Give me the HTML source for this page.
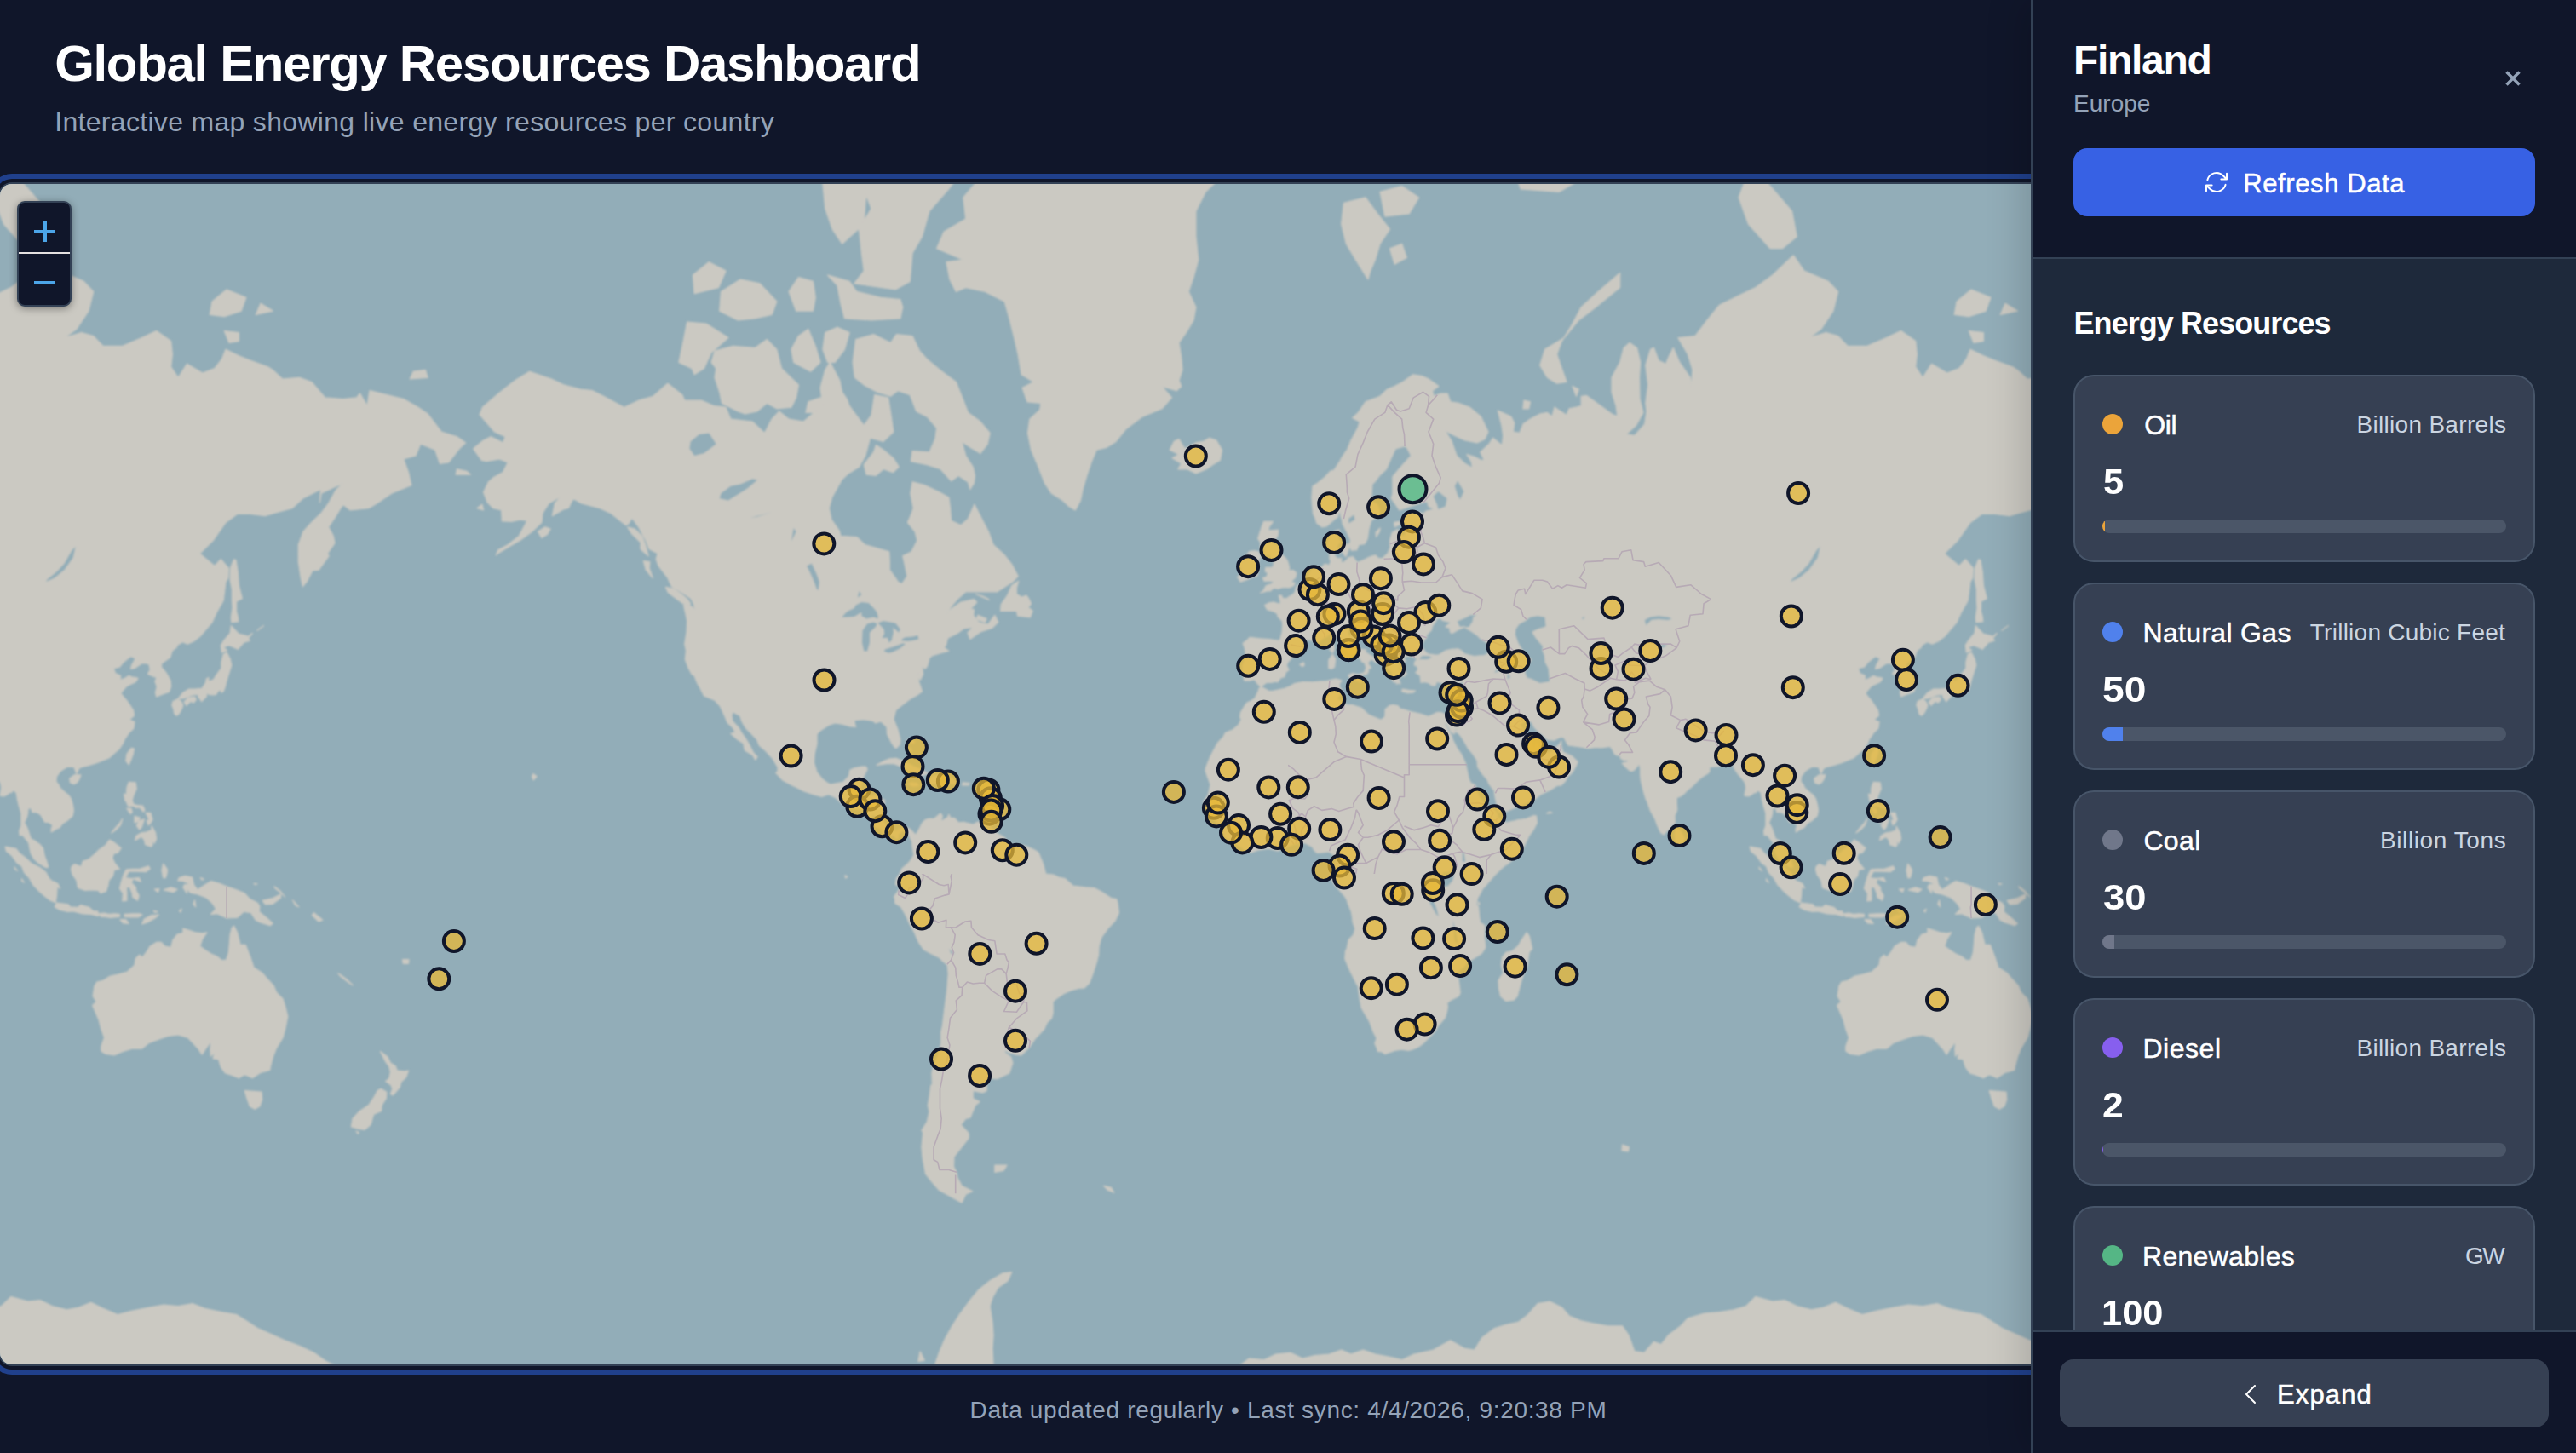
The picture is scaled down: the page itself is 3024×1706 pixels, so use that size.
<!DOCTYPE html>
<html lang="en"><head><meta charset="utf-8"><title>Global Energy Resources Dashboard</title>
<style>
*{box-sizing:border-box;margin:0;padding:0}
html,body{width:3024px;height:1706px;overflow:hidden;background:#10162a;font-family:"Liberation Sans",sans-serif;color:#fff}
.abs{position:absolute;white-space:nowrap;line-height:1}
#title{font-weight:700;color:#fff}
#sub{color:#94a3b8}
#mapwrap{position:absolute;left:-2px;top:214px;width:3030px;height:1390px;border:2px solid #334155;border-radius:16px;overflow:hidden;background:#92adb8;box-shadow:0 0 0 4px #10162a,0 0 0 10px #20408c}
#mapwrap svg{position:absolute;left:0;top:0}
#zoom{position:absolute;left:20px;top:236px;width:64px;height:124px;background:#10162a;border:2px solid #334155;border-radius:9px;box-shadow:0 2px 10px rgba(0,0,0,.4)}
#zoom i{position:absolute;background:#4ca5e8}
#zoom .sep{position:absolute;left:0;top:58px;width:60px;height:2px;background:#e5e1e1}
#foot{width:3024px;text-align:center;color:#94a3b8}
#panel{position:absolute;left:2384px;top:0;width:640px;height:1706px;background:#1e293b;border-left:2px solid #334155;box-shadow:-6px 0 44px rgba(0,0,0,.18);overflow:hidden}
#phead{position:absolute;left:0;top:0;width:638px;height:304px;background:#10162a;border-bottom:2px solid #334155}
#pfoot{position:absolute;left:0;top:1562px;width:638px;height:144px;background:#10162a;border-top:2px solid #334155}
.btn{position:absolute;border-radius:16px}
.card{position:absolute;left:48px;width:542px;height:220px;background:#364053;border:2px solid #475569;border-radius:24px}
.card .dot{position:absolute;left:32px;top:44px;width:24px;height:24px;border-radius:50%}
.card .nm{color:#fff;-webkit-text-stroke:.5px #fff}
.card .un{color:#cbd5e1}
.card .val{font-weight:700;color:#fff}
.card .bar{position:absolute;left:32px;top:168px;width:474px;height:16px;border-radius:8px;background:#4b5668;overflow:hidden}
.card .bar b{position:absolute;left:0;top:0;height:16px;display:block}
</style></head><body>
<div id="title" class="abs" style="left:64.20px;top:45.22px;font-size:60.00px;letter-spacing:-1.339px;">Global Energy Resources Dashboard</div>
<div id="sub" class="abs" style="left:64.20px;top:127.02px;font-size:32.00px;letter-spacing:0.314px;">Interactive map showing live energy resources per country</div>

<div id="mapwrap">
<svg width="3026" height="1386" viewBox="0 216 3026 1386">
<rect x="0" y="200" width="3030" height="1420" fill="#92adb8"/>
<defs><filter id="soft" x="-10" y="190" width="3100" height="1450" filterUnits="userSpaceOnUse"><feGaussianBlur stdDeviation="0.9"/></filter></defs>
<g filter="url(#soft)"><path d="M555.7,526.8 567.6,517.0 576.2,512.8 590.4,519.9 593.2,512.8 580.7,507.0 563.1,486.8 566.5,478.2 585.3,462.0 604.6,446.8 621.7,436.2 647.3,445.0 661.5,451.9 681.4,457.0 695.6,458.7 709.9,466.1 732.6,478.2 749.7,470.2 766.8,465.3 783.8,450.2 800.9,463.7 803.7,470.2 823.6,470.2 837.9,476.6 852.1,478.2 857.8,492.1 883.4,495.1 897.6,508.4 906.1,492.1 914.7,482.9 926.0,492.1 943.1,495.1 957.3,482.9 965.9,476.6 963.0,455.3 968.7,434.4 974.4,425.4 985.8,446.8 988.6,460.3 994.3,468.6 997.2,476.6 1002.8,484.4 1014.2,499.6 1022.8,487.5 1026.7,463.7 1042.7,466.9 1045.5,484.4 1048.9,507.0 1037.0,518.4 1021.6,514.2 1015.9,535.0 1008.5,548.2 996.0,555.9 988.1,563.4 976.7,584.0 973.3,596.7 976.1,610.2 985.2,623.1 986.9,629.4 1005.7,630.5 1015.4,639.7 1043.8,647.8 1044.4,659.6 1044.4,669.1 1051.2,678.5 1054.0,683.1 1058.6,685.8 1064.9,676.6 1061.4,659.6 1059.7,652.7 1070.0,647.8 1076.8,634.6 1074.0,624.2 1065.4,613.4 1069.4,604.6 1072.2,596.7 1068.8,579.3 1071.1,565.9 1085.3,569.6 1103.0,578.1 1113.8,584.0 1115.5,596.7 1116.6,611.2 1128.0,616.7 1136.5,609.1 1143.9,592.2 1151.9,607.9 1160.4,624.2 1166.1,639.7 1179.2,651.8 1187.7,662.5 1195.1,676.6 1188.9,683.1 1170.7,694.8 1150.8,694.8 1133.7,694.8 1124.0,703.6 1117.8,710.5 1109.8,722.3 1116.1,715.6 1128.0,707.1 1143.4,703.6 1146.8,707.1 1140.5,713.9 1136.5,714.8 1143.4,715.6 1142.8,722.3 1146.8,729.0 1150.8,731.4 1159.9,733.1 1167.8,722.3 1171.8,730.6 1165.0,737.1 1150.8,741.9 1138.8,750.6 1136.0,742.7 1142.8,736.3 1131.4,737.9 1124.0,743.5 1112.6,749.1 1110.4,757.6 1108.1,760.0 1113.8,764.5 1106.4,766.1 1093.9,769.8 1091.0,772.9 1088.7,781.8 1085.9,785.4 1082.5,781.8 1083.6,792.0 1080.2,798.4 1077.4,788.4 1078.5,799.9 1082.5,811.8 1076.8,816.0 1068.3,820.8 1057.5,829.0 1051.8,833.7 1048.9,844.3 1054.0,856.7 1056.9,868.3 1056.3,874.0 1052.3,878.4 1050.6,877.8 1046.6,872.1 1041.5,861.9 1041.0,853.5 1034.1,847.0 1027.9,848.9 1024.5,846.3 1015.4,845.0 1010.8,845.0 1002.8,845.6 1004.0,852.2 1004.8,853.5 997.2,852.8 988.6,850.2 980.1,848.9 972.7,851.5 963.6,857.4 959.0,861.9 959.0,873.4 956.2,885.3 955.6,895.8 959.0,906.8 965.3,914.7 971.6,919.5 975.0,921.0 982.9,919.5 989.8,918.3 996.6,911.0 997.7,904.4 1002.8,901.9 1011.4,900.1 1016.5,900.1 1018.2,903.2 1014.2,911.0 1011.4,918.9 1010.2,924.9 1006.8,933.8 1008.5,935.0 1014.2,934.4 1022.8,935.0 1028.4,933.8 1038.7,939.7 1037.0,951.4 1035.8,960.1 1036.4,963.6 1039.8,968.8 1043.8,971.7 1048.4,974.6 1052.3,975.7 1058.0,972.3 1062.6,971.1 1068.3,973.4 1071.7,976.9 1075.1,980.3 1079.6,972.3 1082.5,966.5 1086.5,962.5 1089.9,961.3 1096.7,961.3 1104.1,954.9 1106.4,958.4 1104.7,963.0 1106.4,963.6 1112.6,959.6 1113.8,956.1 1115.5,960.1 1120.6,960.7 1125.2,965.9 1131.4,965.4 1142.2,968.2 1146.8,965.4 1159.3,964.8 1156.4,968.8 1161.6,969.4 1167.8,976.9 1179.2,983.2 1181.5,987.2 1187.2,991.8 1198.0,992.4 1204.8,993.5 1214.5,998.1 1219.0,1000.9 1224.7,1014.6 1227.6,1026.0 1236.7,1027.1 1242.9,1030.0 1250.3,1031.7 1260.0,1040.2 1274.2,1041.9 1284.4,1042.5 1293.0,1047.1 1304.4,1054.5 1310.6,1055.6 1311.8,1059.1 1313.5,1071.7 1308.9,1081.4 1301.5,1089.0 1293.0,1100.6 1290.1,1111.1 1289.6,1121.2 1287.3,1130.1 1282.7,1144.0 1278.8,1154.3 1273.1,1159.9 1266.2,1160.5 1257.1,1163.0 1248.6,1166.7 1239.5,1173.0 1236.1,1176.1 1236.1,1189.5 1234.4,1195.9 1229.3,1200.5 1225.8,1208.3 1215.6,1219.0 1208.2,1229.8 1199.1,1238.8 1192.3,1238.1 1183.2,1235.3 1179.8,1231.9 1179.8,1236.0 1186.6,1240.9 1188.9,1247.9 1184.9,1260.0 1170.7,1266.6 1158.2,1265.8 1158.2,1280.6 1153.6,1282.9 1142.2,1280.6 1142.2,1289.7 1150.2,1293.6 1145.1,1297.5 1138.8,1312.5 1133.7,1313.3 1128.0,1320.6 1137.1,1330.5 1137.1,1336.4 1126.9,1349.3 1120.0,1358.1 1119.5,1369.8 1122.9,1376.3 1124.0,1382.9 1129.1,1392.4 1141.7,1398.8 1133.7,1402.2 1129.1,1412.1 1116.6,1405.2 1102.4,1397.3 1093.9,1387.6 1086.5,1378.2 1083.1,1359.9 1081.9,1346.7 1083.6,1329.7 1081.9,1327.2 1088.2,1317.3 1091.0,1305.3 1089.3,1297.5 1091.0,1288.2 1092.7,1274.7 1094.4,1273.2 1093.9,1260.0 1096.1,1251.4 1101.3,1238.8 1104.7,1225.1 1104.7,1211.6 1106.4,1204.4 1108.7,1185.6 1111.5,1164.2 1113.2,1143.4 1112.1,1133.1 1105.8,1127.7 1102.4,1124.2 1092.7,1119.4 1084.2,1114.7 1077.9,1105.3 1073.4,1094.8 1067.1,1083.2 1064.9,1078.0 1062.0,1072.2 1057.5,1064.8 1050.6,1060.2 1050.6,1055.1 1049.5,1052.8 1054.6,1045.9 1057.5,1041.4 1051.2,1038.5 1052.3,1031.7 1056.3,1026.0 1058.6,1020.3 1063.7,1015.8 1068.3,1011.2 1072.8,1003.8 1071.1,994.7 1070.5,987.2 1068.8,984.9 1066.6,979.2 1059.7,975.2 1054.6,979.2 1054.6,984.4 1051.8,984.9 1050.1,981.5 1045.5,980.3 1040.4,979.2 1040.4,980.3 1035.8,978.0 1033.0,972.3 1027.9,971.1 1023.9,967.1 1024.5,963.0 1018.8,957.2 1014.2,951.4 1008.5,950.2 1000.0,948.5 992.6,946.1 987.5,942.6 981.2,936.7 972.7,932.6 964.7,935.5 954.5,932.6 943.7,929.0 934.6,924.3 930.6,922.5 918.6,915.9 910.7,907.4 913.0,905.6 913.0,900.7 906.7,890.3 898.7,881.5 891.3,875.3 888.5,868.3 881.1,860.6 875.4,854.8 871.4,848.3 868.6,840.4 860.1,835.7 858.9,840.4 860.1,847.0 866.9,854.1 870.3,860.0 874.8,866.4 878.8,872.7 884.5,884.0 889.1,888.4 886.8,892.1 883.4,886.5 874.3,880.9 872.6,872.7 865.7,868.3 857.8,861.3 862.9,860.0 860.6,854.8 853.8,848.3 852.1,843.7 848.1,835.0 845.3,829.0 839.0,822.2 826.5,817.0 822.5,809.0 818.5,802.0 815.1,793.4 812.3,792.0 808.3,784.7 804.3,774.4 805.4,763.8 803.7,756.1 806.0,741.9 806.6,729.0 804.3,718.1 802.6,710.5 812.3,712.2 815.7,717.3 814.5,709.6 811.1,702.7 802.0,696.6 788.4,688.5 783.8,678.5 773.0,664.4 770.2,656.7 771.9,649.8 762.2,644.8 758.2,634.6 749.7,618.8 747.4,615.6 741.7,607.9 738.3,614.5 734.9,616.7 716.7,602.4 704.2,596.7 682.6,591.0 672.9,585.2 667.2,596.7 661.5,597.9 648.4,605.7 651.3,591.0 658.7,582.8 644.4,591.0 637.0,602.4 635.9,613.4 624.5,624.2 610.3,634.6 596.1,642.8 584.7,649.8 582.4,651.8 584.7,645.8 596.1,639.7 609.2,629.4 616.0,616.7 618.8,611.2 610.3,610.2 600.6,612.3 589.3,611.8 588.7,599.0 579.0,596.7 572.2,589.8 567.6,578.1 573.3,565.9 579.0,560.9 590.4,554.6 596.1,543.0 586.4,539.0 571.1,541.6 565.4,540.3ZM1262.3,599.0 1254.9,594.5 1247.5,587.5 1234.4,579.3 1226.4,567.2 1217.9,545.6 1210.5,528.2 1206.5,508.4 1208.8,492.1 1220.7,481.3 1221.9,473.4 1205.9,471.8 1200.2,455.3 1213.3,448.5 1199.1,439.8 1195.1,416.0 1190.6,396.6 1184.9,373.8 1179.2,353.9 1156.4,342.4 1133.7,337.6 1122.3,342.4 1114.9,328.0 1110.9,307.7 1130.8,305.1 1099.6,291.7 1108.1,272.0 1133.7,257.1 1130.8,231.9 1147.9,211.6 1162.1,186.3 1187.7,158.9 1221.9,150.0 1261.7,150.0 1312.9,150.0 1341.3,150.0 1375.5,150.0 1386.8,150.6 1426.7,174.8 1443.7,197.4 1415.3,225.3 1403.9,247.9 1403.9,277.7 1406.8,305.1 1401.1,325.5 1395.4,342.4 1403.9,360.7 1401.1,375.9 1392.5,390.5 1384.0,402.5 1386.8,419.8 1388.0,434.4 1384.0,446.8 1386.8,453.6 1381.2,458.7 1364.1,453.6 1375.5,466.9 1364.1,479.8 1341.3,489.1 1321.4,504.1 1310.0,518.4 1298.7,525.4 1287.3,528.2 1281.6,541.6 1275.9,558.4 1271.4,573.3 1268.5,587.5ZM1138.8,574.5 1136.5,565.9 1125.2,558.4 1116.6,564.7 1104.1,550.8 1088.2,545.6 1069.4,541.6 1071.1,529.5 1091.0,530.9 1097.8,515.6 1099.6,502.6 1088.2,489.1 1075.7,482.9 1068.3,463.7 1054.0,458.7 1045.5,465.3 1029.6,460.3 1014.2,451.9 1003.4,443.3 1001.1,425.4 1004.6,398.6 1025.6,392.5 1045.5,402.5 1052.3,392.5 1071.1,394.6 1079.6,412.2 1088.2,421.7 1103.5,434.4 1122.3,448.5 1129.7,466.9 1136.5,484.4 1150.8,495.1 1162.1,508.4 1159.3,521.3 1150.8,532.3 1139.4,525.4 1129.1,518.4 1133.7,535.0 1142.2,548.2 1144.5,558.4 1143.4,567.2ZM866.3,482.9 847.5,473.4 844.7,460.3 839.0,443.3 840.7,432.6 835.0,425.4 839.0,412.2 860.6,406.4 886.2,408.4 900.4,398.6 911.8,410.3 917.5,432.6 937.4,451.9 934.6,466.9 928.9,478.2 911.8,479.8 900.4,473.4 889.1,482.9 874.8,486.0ZM812.3,432.6 796.9,425.4 802.6,398.6 806.6,378.0 829.3,380.2 854.9,396.6 835.0,414.1 826.5,432.6 815.1,439.8ZM1002.8,332.8 1051.2,340.0 1068.3,330.4 1071.1,297.1 1082.5,277.7 1091.0,247.9 1113.8,221.9 1145.1,178.7 1159.3,150.0 1119.5,150.0 1074.0,150.0 1039.8,150.0 1017.1,158.9 991.5,186.3 1011.4,215.1 1022.8,244.8 1008.5,269.1 1011.4,297.1 1014.2,318.0ZM988.6,286.2 1014.2,263.1 1017.1,221.9 982.9,186.3 965.9,215.1 968.7,244.8 977.2,269.1ZM1056.9,373.8 1022.8,375.9 991.5,373.8 986.9,356.2 982.9,335.2 971.6,323.0 997.2,330.4 1005.7,342.4 1034.1,349.4 1056.9,351.7 1059.7,360.7ZM971.6,425.4 965.9,410.3 968.7,390.5 982.9,384.3 997.2,390.5 991.5,410.3 980.1,425.4ZM951.6,436.2 931.7,425.4 928.9,410.3 937.4,394.6 948.8,386.4 957.3,406.4 963.0,425.4ZM866.3,375.9 844.7,365.1 846.4,342.4 869.2,328.0 891.9,332.8 911.8,353.9 906.1,369.5 886.2,373.8ZM954.5,365.1 934.6,365.1 926.0,342.4 937.4,325.5 954.5,330.4 957.3,349.4ZM815.1,344.7 813.4,323.0 832.2,307.7 852.1,318.0 843.6,337.6ZM946.0,484.4 948.8,471.8 963.0,466.9 968.7,476.6 960.2,484.4ZM1017.1,557.2 1014.2,545.6 1025.6,530.9 1028.4,522.6 1037.0,528.2 1048.4,537.7 1055.2,548.2 1048.4,554.6 1037.0,550.8 1028.4,558.4ZM1209.4,724.8 1194.6,723.2 1193.4,717.3 1174.6,717.3 1175.2,709.6 1182.6,699.2 1187.7,687.6 1195.7,682.2 1193.4,690.3 1193.4,697.5 1199.1,701.0 1204.8,699.2 1207.6,702.7 1210.5,708.8 1207.1,713.1 1212.2,717.3ZM1161.0,704.5 1145.6,697.5 1153.6,700.1 1159.3,702.7ZM1156.4,730.6 1146.2,727.3 1147.9,722.3 1158.2,726.5ZM809.4,711.4 802.0,708.8 792.4,701.8 784.4,695.7 781.5,689.4 790.6,691.2 799.8,697.5 807.1,703.6 810.6,708.8ZM766.2,678.5 758.2,669.1 755.4,658.6 762.8,659.6 762.2,667.2ZM635.9,631.5 631.4,624.2 639.9,618.8 646.2,621.0 642.7,627.3ZM761.1,652.7 752.0,644.8 752.0,636.7 741.2,626.3 736.6,618.8 745.1,621.0 753.7,629.4 757.7,639.7ZM552.3,557.2 535.2,557.2 536.4,550.8 547.7,553.3ZM567.6,599.0 560.2,596.7 565.9,592.2ZM1029.0,898.3 1038.1,893.3 1044.4,890.9 1051.8,890.3 1062.6,894.6 1072.8,900.1 1080.8,903.2 1089.9,908.0 1083.6,910.4 1070.5,910.4 1072.2,906.2 1067.1,905.6 1058.0,900.1 1050.1,897.0 1042.7,896.4 1034.1,897.7ZM1088.7,919.5 1094.4,911.7 1102.4,910.4 1110.9,911.0 1118.3,914.1 1122.9,918.3 1119.5,920.7 1110.9,919.5 1105.2,923.7 1099.6,920.7 1093.3,920.7ZM1066.6,920.7 1069.4,918.9 1076.2,919.5 1078.5,922.5 1072.2,923.1ZM1129.7,921.9 1130.3,918.9 1138.2,919.5 1137.1,921.9ZM1159.9,968.2 1161.6,964.2 1165.5,964.2 1165.0,968.2ZM1070.0,884.0 1067.1,878.4 1069.4,879.0ZM1064.3,869.6 1068.8,868.3 1074.0,870.8 1071.7,872.7ZM1167.8,1368.0 1182.0,1368.0 1178.1,1374.4 1167.8,1376.3ZM626.2,915.9 624.5,911.7 625.7,908.6 630.2,911.7ZM992.6,1031.1 992.0,1027.7 994.9,1029.4ZM-587.2,799.1 -589.5,786.9 -589.5,781.8 -585.5,769.1 -586.6,761.5 -588.9,755.3 -583.8,751.4 -580.9,748.3 -568.4,749.8 -557.6,750.6 -553.1,751.4 -546.8,752.2 -545.1,750.6 -542.8,741.9 -542.3,733.9 -542.8,729.0 -547.9,724.0 -548.5,720.7 -552.5,718.1 -560.5,715.6 -563.3,710.5 -558.2,707.9 -553.1,707.1 -547.4,708.8 -544.5,708.8 -546.8,699.2 -543.4,699.2 -542.3,702.7 -537.1,702.7 -535.4,701.0 -529.7,697.5 -527.5,694.8 -526.9,690.3 -525.2,687.6 -522.3,687.2 -519.5,685.8 -516.1,683.1 -512.7,678.5 -509.0,669.6 -505.3,667.2 -500.7,665.3 -496.2,666.3 -493.3,662.5 -490.5,662.5 -487.6,664.4 -486.5,660.5 -484.8,660.5 -487.1,656.7 -487.1,650.8 -488.8,644.8 -489.9,639.7 -487.1,628.4 -479.7,623.1 -475.7,622.0 -476.3,625.2 -477.4,632.5 -474.0,635.6 -477.4,639.7 -480.2,644.8 -480.8,649.8 -482.0,651.8 -478.0,655.7 -472.9,655.7 -474.0,659.6 -471.1,660.5 -467.2,657.6 -464.9,654.7 -459.8,653.7 -454.6,660.5 -447.3,657.6 -439.9,653.7 -433.6,651.8 -429.6,655.7 -425.1,655.7 -422.2,652.7 -418.8,649.8 -416.0,642.8 -416.5,634.6 -413.7,625.2 -407.4,621.5 -403.4,629.4 -398.9,629.4 -397.2,623.1 -396.6,614.5 -402.3,611.2 -402.3,607.9 -395.5,602.9 -389.2,601.3 -376.7,602.9 -373.9,600.1 -364.2,597.9 -371.0,594.5 -372.7,588.7 -381.3,591.0 -393.8,595.0 -405.2,599.0 -409.7,592.2 -414.8,585.2 -413.1,579.3 -413.1,559.7 -405.7,550.8 -401.2,545.6 -391.5,535.0 -396.6,525.4 -398.9,524.0 -409.7,526.8 -415.4,539.0 -420.5,550.8 -428.5,558.4 -434.2,565.9 -437.0,568.4 -437.6,576.9 -438.2,588.7 -431.3,592.2 -429.0,596.7 -428.5,604.6 -438.2,611.2 -441.0,621.0 -442.7,632.5 -446.1,638.7 -452.9,639.7 -455.2,645.8 -457.5,645.8 -461.5,646.3 -462.6,643.8 -463.8,639.7 -462.6,634.6 -463.2,632.5 -468.3,622.0 -471.7,615.6 -472.9,609.1 -474.0,606.8 -475.1,597.9 -478.0,607.9 -479.1,607.9 -485.4,613.4 -490.5,617.8 -496.2,618.8 -502.4,614.0 -504.1,607.9 -506.4,603.5 -507.6,592.2 -508.1,584.0 -507.0,570.8 -501.3,567.2 -496.7,563.4 -492.2,559.7 -486.5,553.3 -482.0,552.1 -475.1,541.6 -472.3,536.3 -466.6,528.2 -462.0,517.0 -454.1,502.6 -451.8,495.1 -460.3,490.6 -453.5,484.4 -445.0,471.8 -436.4,468.6 -427.9,465.3 -419.4,457.0 -410.8,453.6 -401.2,448.5 -389.2,439.8 -378.4,441.5 -371.0,445.0 -359.1,453.6 -366.5,458.7 -364.8,465.3 -356.8,462.0 -348.8,462.0 -345.4,471.8 -335.8,473.4 -322.7,478.2 -309.6,489.1 -301.0,507.0 -305.0,515.6 -314.1,519.9 -328.4,517.0 -340.9,511.3 -351.7,505.5 -344.3,517.0 -338.0,535.0 -328.4,544.3 -319.3,549.5 -321.0,541.6 -326.1,533.6 -317.0,536.3 -309.6,540.3 -305.6,540.3 -310.2,530.9 -299.9,521.3 -295.4,514.2 -286.8,521.3 -284.6,522.6 -283.4,511.3 -285.1,499.6 -289.7,482.1 -274.3,489.1 -270.3,496.6 -271.5,507.0 -264.1,508.4 -260.1,498.1 -251.6,492.1 -240.2,486.0 -231.6,484.4 -226.0,489.1 -223.1,478.2 -208.9,487.5 -206.0,479.8 -197.5,478.2 -191.8,476.6 -191.8,465.3 -185.6,464.5 -169.1,476.6 -156.0,486.0 -149.2,489.1 -150.9,476.6 -156.0,460.3 -156.0,443.3 -146.3,425.4 -141.8,408.4 -134.9,402.5 -126.4,408.4 -122.4,425.4 -123.6,443.3 -123.0,468.6 -119.0,484.4 -127.5,499.6 -138.9,509.9 -129.2,511.3 -117.3,498.1 -115.0,482.9 -116.2,473.4 -113.3,451.9 -116.2,429.0 -110.5,410.3 -106.5,408.4 -100.8,423.5 -92.3,427.2 -89.4,419.8 -83.7,408.4 -76.3,425.4 -63.8,443.3 -62.7,455.3 -61.0,434.4 -66.7,416.0 -78.0,396.6 -58.1,394.6 -43.9,375.9 -29.7,358.4 -6.9,347.0 13.0,337.6 32.9,323.0 57.4,299.8 69.9,318.0 98.3,330.4 109.7,342.4 104.0,365.1 89.8,386.4 75.6,396.6 95.5,390.5 109.7,394.6 121.1,406.4 143.8,406.4 166.6,396.6 183.6,388.5 200.7,400.6 202.4,416.0 200.7,430.8 209.2,443.3 219.5,427.2 237.7,438.0 251.9,432.6 260.4,421.7 265.0,410.3 280.4,417.9 294.6,423.5 314.5,430.8 320.2,434.4 331.6,445.0 351.5,443.3 365.7,448.5 381.6,466.9 402.7,468.6 418.6,466.9 422.6,462.0 431.1,476.6 432.8,465.3 434.0,458.7 453.9,463.7 473.8,468.6 490.8,478.2 502.2,486.0 518.2,507.0 536.4,512.8 546.6,519.9 539.2,526.8 526.7,543.0 516.4,544.3 510.8,528.2 493.7,521.3 488.0,535.0 473.8,539.0 479.5,554.6 482.9,569.6 459.6,579.3 442.5,591.0 432.8,596.7 411.2,599.0 402.7,592.2 393.0,607.9 385.6,618.8 391.3,629.4 393.0,637.7 384.5,649.8 386.2,652.7 374.2,669.1 366.8,670.1 360.0,683.1 355.4,688.5 353.2,678.5 350.3,659.6 350.3,639.7 356.0,624.2 365.7,613.4 377.1,602.4 385.6,591.0 394.1,575.7 402.7,567.2 377.1,579.3 375.4,589.8 376.5,574.5 355.4,585.2 342.9,596.7 321.9,602.4 311.1,605.7 293.4,603.5 278.6,603.5 265.0,613.4 250.2,634.6 234.8,649.8 237.7,652.7 251.9,664.4 259.3,656.7 268.4,667.2 267.8,678.5 265.0,683.1 263.3,696.6 262.2,705.3 254.8,718.1 249.1,730.6 242.2,738.7 235.4,746.7 227.4,753.0 220.1,756.1 214.4,753.8 208.1,757.6 207.5,760.0 202.4,763.8 199.6,772.1 192.2,777.3 189.9,778.8 189.3,783.2 195.0,789.8 200.1,799.1 200.7,806.2 198.4,812.5 190.5,815.3 183.6,818.0 182.5,813.2 184.2,806.2 181.9,799.9 184.2,795.6 178.0,793.4 173.4,791.2 176.2,786.9 175.1,780.3 171.1,778.8 166.6,778.8 158.0,784.7 153.5,785.4 154.6,781.0 159.2,772.9 153.5,770.6 144.4,778.1 140.4,783.2 133.6,784.7 135.3,790.5 141.5,793.4 141.0,798.4 146.7,796.3 151.2,793.4 154.6,794.9 159.2,795.6 162.0,796.3 159.2,800.6 148.9,805.5 143.3,811.8 142.1,814.6 149.5,823.5 156.3,833.7 156.9,835.7 157.5,840.4 151.8,845.0 158.0,847.6 156.9,855.4 151.8,860.0 146.1,868.3 144.4,872.7 141.0,877.8 139.8,879.7 135.9,882.8 128.5,889.6 121.1,892.7 113.7,895.8 109.7,897.0 101.2,899.5 95.5,900.7 92.6,902.5 89.8,908.6 88.1,903.8 86.9,900.7 80.1,900.1 78.4,900.7 71.6,905.0 66.5,911.7 65.9,917.7 69.3,921.9 70.4,924.9 76.7,930.8 80.1,933.2 83.5,937.9 85.8,946.7 86.4,952.0 85.2,957.8 79.0,963.6 73.3,967.1 69.9,971.7 65.9,973.4 60.2,976.9 60.2,972.9 61.9,968.8 58.5,966.5 56.8,965.4 52.8,965.4 50.0,960.7 48.2,957.2 44.3,954.3 40.3,953.4 38.0,953.7 36.3,948.5 32.9,949.6 32.7,954.3 31.8,958.4 28.6,965.9 32.3,972.9 34.0,978.0 36.3,984.9 40.3,986.7 43.7,989.5 46.0,990.7 50.5,995.8 52.2,1004.4 55.1,1012.3 56.8,1018.0 54.5,1018.6 51.7,1017.5 49.4,1015.8 45.4,1013.5 40.3,1008.9 36.3,1002.1 34.6,995.2 34.0,990.7 32.9,988.4 29.5,984.4 26.6,980.3 23.2,980.9 22.6,975.7 24.9,969.4 24.9,954.9 22.1,945.6 20.4,938.5 19.2,930.8 15.8,927.8 13.0,930.8 11.8,930.2 7.3,933.8 4.4,935.0 0.5,934.4 -0.1,933.8 1.6,924.9 0.5,918.9 -3.5,913.5 -7.5,909.2 -12.6,901.3 -13.8,895.8 -16.6,892.7 -20.0,894.6 -22.3,897.7 -26.8,898.9 -32.5,900.1 -38.2,900.1 -41.1,901.3 -41.1,905.6 -42.8,908.0 -47.9,911.0 -53.0,914.7 -62.1,923.7 -67.8,928.4 -71.2,932.0 -75.2,935.0 -79.8,936.7 -79.8,943.2 -79.2,950.8 -82.0,957.8 -81.7,964.2 -82.0,967.1 -86.6,970.0 -85.4,972.9 -88.3,973.4 -91.1,975.7 -94.8,979.9 -98.5,977.5 -102.5,969.0 -105.1,961.6 -110.5,952.0 -114.5,940.9 -116.2,937.3 -119.0,927.8 -121.8,916.2 -122.4,909.8 -122.4,903.2 -123.0,899.5 -123.6,895.8 -125.3,898.9 -129.2,903.8 -132.1,905.6 -135.5,904.4 -140.1,900.1 -143.8,896.1 -137.8,894.6 -136.1,892.1 -141.5,892.7 -145.7,890.3 -146.3,886.5 -149.2,887.2 -152.6,885.3 -155.0,880.3 -157.7,876.5 -168.5,877.8 -175.0,877.5 -181.6,878.4 -184.7,878.7 -191.3,877.2 -207.2,874.9 -212.3,865.7 -216.3,865.4 -223.7,869.2 -231.6,868.3 -236.8,863.2 -239.6,861.3 -247.0,854.1 -249.8,848.3 -253.8,846.3 -259.5,847.3 -264.6,851.2 -260.1,856.7 -253.5,866.4 -251.0,869.9 -249.8,874.0 -247.0,880.9 -244.7,871.8 -242.7,877.2 -243.6,881.5 -242.5,884.0 -237.3,884.7 -226.8,882.5 -221.4,877.5 -217.4,874.0 -215.1,870.2 -215.4,875.3 -213.2,883.1 -202.6,887.8 -195.8,894.6 -198.6,900.7 -202.1,906.8 -207.8,912.0 -210.0,916.5 -215.1,921.9 -220.3,922.5 -228.2,927.8 -233.9,930.2 -239.0,932.6 -245.9,937.9 -256.7,942.6 -262.9,945.6 -271.5,949.1 -280.0,952.6 -288.8,953.4 -290.0,949.6 -291.7,940.9 -293.1,935.0 -293.9,928.4 -299.9,920.7 -302.2,915.3 -308.4,908.0 -313.3,900.7 -314.1,892.7 -319.5,884.7 -324.4,879.0 -328.6,871.5 -332.9,864.5 -336.9,860.0 -339.2,860.0 -338.0,856.7 -336.9,850.2 -337.5,850.2 -339.7,856.7 -341.2,861.9 -344.9,858.7 -347.7,853.5 -350.8,847.3 -352.2,838.7 -343.7,839.4 -340.0,837.0 -338.3,833.0 -336.9,828.3 -335.8,824.9 -334.0,820.8 -332.3,817.0 -332.6,809.7 -331.5,806.2 -330.1,802.0 -331.2,799.9 -334.9,802.3 -339.2,800.6 -342.9,804.1 -349.1,805.9 -354.0,802.3 -361.4,800.2 -363.1,804.8 -367.3,804.8 -370.5,802.0 -375.3,800.6 -380.1,801.3 -380.1,799.1 -381.0,793.1 -386.4,789.8 -383.5,786.9 -384.1,782.5 -387.8,781.0 -387.2,777.3 -385.8,776.2 -380.7,774.4 -377.0,774.7 -371.6,774.4 -365.9,771.7 -370.7,769.8 -370.2,768.3 -367.6,768.3 -363.6,769.1 -359.1,769.1 -355.1,766.4 -351.7,764.2 -344.0,762.4 -336.0,761.9 -331.5,764.5 -329.2,767.6 -323.8,769.1 -320.4,769.8 -317.5,770.6 -310.2,769.8 -305.6,769.5 -300.5,766.8 -299.3,764.9 -299.1,761.1 -302.8,754.5 -310.2,749.8 -313.8,745.9 -321.0,741.1 -323.8,739.5 -327.8,737.1 -323.2,736.3 -319.0,730.2 -318.1,724.8 -312.4,721.5 -322.7,721.9 -326.6,724.4 -335.2,728.1 -338.0,729.4 -334.6,736.3 -328.4,735.9 -334.6,738.7 -337.2,739.9 -341.7,742.7 -344.0,743.5 -345.7,741.9 -346.3,737.1 -351.1,735.9 -344.9,731.0 -348.8,729.8 -355.1,728.1 -356.5,725.7 -361.1,726.5 -362.8,729.8 -366.8,735.5 -367.6,739.9 -373.0,745.1 -373.3,748.3 -377.0,753.0 -379.6,758.4 -377.3,761.5 -376.7,763.0 -373.3,766.8 -370.5,768.3 -371.3,769.8 -375.3,769.5 -379.6,770.1 -381.8,772.9 -384.4,774.4 -387.0,777.0 -383.5,772.9 -387.8,772.1 -388.7,771.0 -393.2,770.2 -397.2,770.2 -401.2,772.1 -397.5,776.2 -400.0,775.1 -399.8,777.7 -402.9,775.1 -402.9,777.7 -405.4,772.9 -407.4,775.1 -406.9,778.1 -403.2,783.6 -405.4,782.5 -407.7,785.8 -401.7,787.6 -399.2,790.5 -399.5,794.5 -401.2,792.7 -405.2,792.7 -403.4,795.6 -406.3,795.2 -405.2,799.1 -404.0,803.0 -407.7,800.9 -408.0,803.4 -410.3,799.1 -411.4,801.1 -412.6,799.9 -414.8,794.9 -415.7,792.3 -412.6,790.2 -414.3,789.4 -418.0,785.1 -420.8,781.0 -422.2,778.4 -426.2,774.4 -425.4,767.6 -425.6,763.4 -427.3,761.5 -430.5,759.2 -433.0,757.3 -437.0,754.5 -442.4,750.6 -445.5,749.1 -449.2,745.9 -450.4,742.7 -451.2,738.7 -453.8,736.3 -457.2,739.9 -458.6,737.1 -459.2,735.1 -457.8,733.5 -458.9,732.2 -465.7,735.5 -464.9,739.1 -466.0,743.5 -464.3,746.3 -459.2,749.8 -454.9,758.8 -450.7,762.3 -444.1,763.0 -445.5,765.3 -439.9,769.1 -433.9,772.5 -430.8,776.2 -431.6,778.8 -433.6,777.0 -438.2,774.0 -441.6,777.3 -442.1,779.2 -438.4,784.0 -441.6,785.4 -441.8,789.1 -444.7,792.5 -447.0,791.2 -445.5,787.6 -444.4,784.7 -444.7,782.1 -446.7,777.3 -449.0,777.3 -451.8,772.5 -454.4,772.9 -454.9,771.0 -458.9,768.3 -461.8,768.3 -464.3,766.4 -466.3,764.2 -468.9,761.5 -472.9,759.2 -476.3,754.9 -477.4,750.2 -480.2,745.9 -485.4,743.5 -487.6,744.3 -490.5,747.5 -493.9,748.7 -496.2,750.2 -498.2,753.0 -502.2,753.8 -505.6,752.2 -508.7,751.8 -512.7,750.6 -515.0,751.4 -518.4,753.8 -518.6,756.9 -517.2,760.0 -523.8,767.2 -528.9,769.1 -531.2,772.1 -536.0,777.3 -537.7,781.4 -534.9,786.5 -538.8,789.4 -540.0,794.5 -545.1,796.3 -548.2,800.9 -549.9,800.2 -555.9,801.3 -561.0,801.3 -566.4,805.2 -567.9,806.2 -571.8,802.7 -575.5,797.7 -580.9,799.1ZM1460.8,799.1 1458.5,786.9 1458.5,781.8 1462.5,769.1 1461.4,761.5 1459.1,755.3 1464.2,751.4 1467.1,748.3 1479.6,749.8 1490.4,750.6 1494.9,751.4 1501.2,752.2 1502.9,750.6 1505.2,741.9 1505.7,733.9 1505.2,729.0 1500.1,724.0 1499.5,720.7 1495.5,718.1 1487.5,715.6 1484.7,710.5 1489.8,707.9 1494.9,707.1 1500.6,708.8 1503.5,708.8 1501.2,699.2 1504.6,699.2 1505.7,702.7 1510.9,702.7 1512.6,701.0 1518.3,697.5 1520.5,694.8 1521.1,690.3 1522.8,687.6 1525.7,687.2 1528.5,685.8 1531.9,683.1 1535.3,678.5 1539.0,669.6 1542.7,667.2 1547.3,665.3 1551.8,666.3 1554.7,662.5 1557.5,662.5 1560.4,664.4 1561.5,660.5 1563.2,660.5 1560.9,656.7 1560.9,650.8 1559.2,644.8 1558.1,639.7 1560.9,628.4 1568.3,623.1 1572.3,622.0 1571.7,625.2 1570.6,632.5 1574.0,635.6 1570.6,639.7 1567.8,644.8 1567.2,649.8 1566.0,651.8 1570.0,655.7 1575.1,655.7 1574.0,659.6 1576.9,660.5 1580.8,657.6 1583.1,654.7 1588.2,653.7 1593.4,660.5 1600.7,657.6 1608.1,653.7 1614.4,651.8 1618.4,655.7 1622.9,655.7 1625.8,652.7 1629.2,649.8 1632.0,642.8 1631.5,634.6 1634.3,625.2 1640.6,621.5 1644.6,629.4 1649.1,629.4 1650.8,623.1 1651.4,614.5 1645.7,611.2 1645.7,607.9 1652.5,602.9 1658.8,601.3 1671.3,602.9 1674.1,600.1 1683.8,597.9 1677.0,594.5 1675.3,588.7 1666.7,591.0 1654.2,595.0 1642.8,599.0 1638.3,592.2 1633.2,585.2 1634.9,579.3 1634.9,559.7 1642.3,550.8 1646.8,545.6 1656.5,535.0 1651.4,525.4 1649.1,524.0 1638.3,526.8 1632.6,539.0 1627.5,550.8 1619.5,558.4 1613.8,565.9 1611.0,568.4 1610.4,576.9 1609.8,588.7 1616.7,592.2 1619.0,596.7 1619.5,604.6 1609.8,611.2 1607.0,621.0 1605.3,632.5 1601.9,638.7 1595.1,639.7 1592.8,645.8 1590.5,645.8 1586.5,646.3 1585.4,643.8 1584.2,639.7 1585.4,634.6 1584.8,632.5 1579.7,622.0 1576.3,615.6 1575.1,609.1 1574.0,606.8 1572.9,597.9 1570.0,607.9 1568.9,607.9 1562.6,613.4 1557.5,617.8 1551.8,618.8 1545.6,614.0 1543.9,607.9 1541.6,603.5 1540.4,592.2 1539.9,584.0 1541.0,570.8 1546.7,567.2 1551.3,563.4 1555.8,559.7 1561.5,553.3 1566.0,552.1 1572.9,541.6 1575.7,536.3 1581.4,528.2 1586.0,517.0 1593.9,502.6 1596.2,495.1 1587.7,490.6 1594.5,484.4 1603.0,471.8 1611.6,468.6 1620.1,465.3 1628.6,457.0 1637.2,453.6 1646.8,448.5 1658.8,439.8 1669.6,441.5 1677.0,445.0 1688.9,453.6 1681.5,458.7 1683.2,465.3 1691.2,462.0 1699.2,462.0 1702.6,471.8 1712.2,473.4 1725.3,478.2 1738.4,489.1 1747.0,507.0 1743.0,515.6 1733.9,519.9 1719.6,517.0 1707.1,511.3 1696.3,505.5 1703.7,517.0 1710.0,535.0 1719.6,544.3 1728.7,549.5 1727.0,541.6 1721.9,533.6 1731.0,536.3 1738.4,540.3 1742.4,540.3 1737.8,530.9 1748.1,521.3 1752.6,514.2 1761.2,521.3 1763.4,522.6 1764.6,511.3 1762.9,499.6 1758.3,482.1 1773.7,489.1 1777.7,496.6 1776.5,507.0 1783.9,508.4 1787.9,498.1 1796.4,492.1 1807.8,486.0 1816.4,484.4 1822.0,489.1 1824.9,478.2 1839.1,487.5 1842.0,479.8 1850.5,478.2 1856.2,476.6 1856.2,465.3 1862.4,464.5 1878.9,476.6 1892.0,486.0 1898.8,489.1 1897.1,476.6 1892.0,460.3 1892.0,443.3 1901.7,425.4 1906.2,408.4 1913.1,402.5 1921.6,408.4 1925.6,425.4 1924.4,443.3 1925.0,468.6 1929.0,484.4 1920.5,499.6 1909.1,509.9 1918.8,511.3 1930.7,498.1 1933.0,482.9 1931.8,473.4 1934.7,451.9 1931.8,429.0 1937.5,410.3 1941.5,408.4 1947.2,423.5 1955.7,427.2 1958.6,419.8 1964.3,408.4 1971.7,425.4 1984.2,443.3 1985.3,455.3 1987.0,434.4 1981.3,416.0 1970.0,396.6 1989.9,394.6 2004.1,375.9 2018.3,358.4 2041.1,347.0 2061.0,337.6 2080.9,323.0 2105.4,299.8 2117.9,318.0 2146.3,330.4 2157.7,342.4 2152.0,365.1 2137.8,386.4 2123.6,396.6 2143.5,390.5 2157.7,394.6 2169.1,406.4 2191.8,406.4 2214.6,396.6 2231.6,388.5 2248.7,400.6 2250.4,416.0 2248.7,430.8 2257.2,443.3 2267.5,427.2 2285.7,438.0 2299.9,432.6 2308.4,421.7 2313.0,410.3 2328.4,417.9 2342.6,423.5 2362.5,430.8 2368.2,434.4 2379.6,445.0 2399.5,443.3 2413.7,448.5 2429.6,466.9 2450.7,468.6 2466.6,466.9 2470.6,462.0 2479.1,476.6 2480.8,465.3 2482.0,458.7 2501.9,463.7 2521.8,468.6 2538.8,478.2 2550.2,486.0 2566.2,507.0 2584.4,512.8 2594.6,519.9 2587.2,526.8 2574.7,543.0 2564.4,544.3 2558.8,528.2 2541.7,521.3 2536.0,535.0 2521.8,539.0 2527.5,554.6 2530.9,569.6 2507.6,579.3 2490.5,591.0 2480.8,596.7 2459.2,599.0 2450.7,592.2 2441.0,607.9 2433.6,618.8 2439.3,629.4 2441.0,637.7 2432.5,649.8 2434.2,652.7 2422.2,669.1 2414.8,670.1 2408.0,683.1 2403.4,688.5 2401.2,678.5 2398.3,659.6 2398.3,639.7 2404.0,624.2 2413.7,613.4 2425.1,602.4 2433.6,591.0 2442.1,575.7 2450.7,567.2 2425.1,579.3 2423.4,589.8 2424.5,574.5 2403.4,585.2 2390.9,596.7 2369.9,602.4 2359.1,605.7 2341.4,603.5 2326.6,603.5 2313.0,613.4 2298.2,634.6 2282.8,649.8 2285.7,652.7 2299.9,664.4 2307.3,656.7 2316.4,667.2 2315.8,678.5 2313.0,683.1 2311.3,696.6 2310.2,705.3 2302.8,718.1 2297.1,730.6 2290.2,738.7 2283.4,746.7 2275.4,753.0 2268.1,756.1 2262.4,753.8 2256.1,757.6 2255.5,760.0 2250.4,763.8 2247.6,772.1 2240.2,777.3 2237.9,778.8 2237.3,783.2 2243.0,789.8 2248.1,799.1 2248.7,806.2 2246.4,812.5 2238.5,815.3 2231.6,818.0 2230.5,813.2 2232.2,806.2 2229.9,799.9 2232.2,795.6 2226.0,793.4 2221.4,791.2 2224.2,786.9 2223.1,780.3 2219.1,778.8 2214.6,778.8 2206.0,784.7 2201.5,785.4 2202.6,781.0 2207.2,772.9 2201.5,770.6 2192.4,778.1 2188.4,783.2 2181.6,784.7 2183.3,790.5 2189.5,793.4 2189.0,798.4 2194.7,796.3 2199.2,793.4 2202.6,794.9 2207.2,795.6 2210.0,796.3 2207.2,800.6 2196.9,805.5 2191.3,811.8 2190.1,814.6 2197.5,823.5 2204.3,833.7 2204.9,835.7 2205.5,840.4 2199.8,845.0 2206.0,847.6 2204.9,855.4 2199.8,860.0 2194.1,868.3 2192.4,872.7 2189.0,877.8 2187.8,879.7 2183.9,882.8 2176.5,889.6 2169.1,892.7 2161.7,895.8 2157.7,897.0 2149.2,899.5 2143.5,900.7 2140.6,902.5 2137.8,908.6 2136.1,903.8 2134.9,900.7 2128.1,900.1 2126.4,900.7 2119.6,905.0 2114.5,911.7 2113.9,917.7 2117.3,921.9 2118.4,924.9 2124.7,930.8 2128.1,933.2 2131.5,937.9 2133.8,946.7 2134.4,952.0 2133.2,957.8 2127.0,963.6 2121.3,967.1 2117.9,971.7 2113.9,973.4 2108.2,976.9 2108.2,972.9 2109.9,968.8 2106.5,966.5 2104.8,965.4 2100.8,965.4 2098.0,960.7 2096.2,957.2 2092.3,954.3 2088.3,953.4 2086.0,953.7 2084.3,948.5 2080.9,949.6 2080.7,954.3 2079.8,958.4 2076.6,965.9 2080.3,972.9 2082.0,978.0 2084.3,984.9 2088.3,986.7 2091.7,989.5 2094.0,990.7 2098.5,995.8 2100.2,1004.4 2103.1,1012.3 2104.8,1018.0 2102.5,1018.6 2099.7,1017.5 2097.4,1015.8 2093.4,1013.5 2088.3,1008.9 2084.3,1002.1 2082.6,995.2 2082.0,990.7 2080.9,988.4 2077.5,984.4 2074.6,980.3 2071.2,980.9 2070.6,975.7 2072.9,969.4 2072.9,954.9 2070.1,945.6 2068.4,938.5 2067.2,930.8 2063.8,927.8 2061.0,930.8 2059.8,930.2 2055.3,933.8 2052.4,935.0 2048.5,934.4 2047.9,933.8 2049.6,924.9 2048.5,918.9 2044.5,913.5 2040.5,909.2 2035.4,901.3 2034.2,895.8 2031.4,892.7 2028.0,894.6 2025.7,897.7 2021.2,898.9 2015.5,900.1 2009.8,900.1 2006.9,901.3 2006.9,905.6 2005.2,908.0 2000.1,911.0 1995.0,914.7 1985.9,923.7 1980.2,928.4 1976.8,932.0 1972.8,935.0 1968.2,936.7 1968.2,943.2 1968.8,950.8 1966.0,957.8 1966.3,964.2 1966.0,967.1 1961.4,970.0 1962.6,972.9 1959.7,973.4 1956.9,975.7 1953.2,979.9 1949.5,977.5 1945.5,969.0 1942.9,961.6 1937.5,952.0 1933.5,940.9 1931.8,937.3 1929.0,927.8 1926.2,916.2 1925.6,909.8 1925.6,903.2 1925.0,899.5 1924.4,895.8 1922.7,898.9 1918.8,903.8 1915.9,905.6 1912.5,904.4 1907.9,900.1 1904.2,896.1 1910.2,894.6 1911.9,892.1 1906.5,892.7 1902.3,890.3 1901.7,886.5 1898.8,887.2 1895.4,885.3 1893.0,880.3 1890.3,876.5 1879.5,877.8 1873.0,877.5 1866.4,878.4 1863.3,878.7 1856.7,877.2 1840.8,874.9 1835.7,865.7 1831.7,865.4 1824.3,869.2 1816.4,868.3 1811.2,863.2 1808.4,861.3 1801.0,854.1 1798.2,848.3 1794.2,846.3 1788.5,847.3 1783.4,851.2 1787.9,856.7 1794.5,866.4 1797.0,869.9 1798.2,874.0 1801.0,880.9 1803.3,871.8 1805.3,877.2 1804.4,881.5 1805.5,884.0 1810.7,884.7 1821.2,882.5 1826.6,877.5 1830.6,874.0 1832.9,870.2 1832.6,875.3 1834.8,883.1 1845.4,887.8 1852.2,894.6 1849.4,900.7 1845.9,906.8 1840.2,912.0 1838.0,916.5 1832.9,921.9 1827.7,922.5 1819.8,927.8 1814.1,930.2 1809.0,932.6 1802.1,937.9 1791.3,942.6 1785.1,945.6 1776.5,949.1 1768.0,952.6 1759.2,953.4 1758.0,949.6 1756.3,940.9 1754.9,935.0 1754.1,928.4 1748.1,920.7 1745.8,915.3 1739.6,908.0 1734.7,900.7 1733.9,892.7 1728.5,884.7 1723.6,879.0 1719.4,871.5 1715.1,864.5 1711.1,860.0 1708.8,860.0 1710.0,856.7 1711.1,850.2 1710.5,850.2 1708.3,856.7 1706.8,861.9 1703.1,858.7 1700.3,853.5 1697.2,847.3 1695.8,838.7 1704.3,839.4 1708.0,837.0 1709.7,833.0 1711.1,828.3 1712.2,824.9 1714.0,820.8 1715.7,817.0 1715.4,809.7 1716.5,806.2 1717.9,802.0 1716.8,799.9 1713.1,802.3 1708.8,800.6 1705.1,804.1 1698.9,805.9 1694.0,802.3 1686.6,800.2 1684.9,804.8 1680.7,804.8 1677.5,802.0 1672.7,800.6 1667.9,801.3 1667.9,799.1 1667.0,793.1 1661.6,789.8 1664.5,786.9 1663.9,782.5 1660.2,781.0 1660.8,777.3 1662.2,776.2 1667.3,774.4 1671.0,774.7 1676.4,774.4 1682.1,771.7 1677.3,769.8 1677.8,768.3 1680.4,768.3 1684.4,769.1 1688.9,769.1 1692.9,766.4 1696.3,764.2 1704.0,762.4 1712.0,761.9 1716.5,764.5 1718.8,767.6 1724.2,769.1 1727.6,769.8 1730.5,770.6 1737.8,769.8 1742.4,769.5 1747.5,766.8 1748.7,764.9 1748.9,761.1 1745.2,754.5 1737.8,749.8 1734.2,745.9 1727.0,741.1 1724.2,739.5 1720.2,737.1 1724.8,736.3 1729.0,730.2 1729.9,724.8 1735.6,721.5 1725.3,721.9 1721.4,724.4 1712.8,728.1 1710.0,729.4 1713.4,736.3 1719.6,735.9 1713.4,738.7 1710.8,739.9 1706.3,742.7 1704.0,743.5 1702.3,741.9 1701.7,737.1 1696.9,735.9 1703.1,731.0 1699.2,729.8 1692.9,728.1 1691.5,725.7 1686.9,726.5 1685.2,729.8 1681.2,735.5 1680.4,739.9 1675.0,745.1 1674.7,748.3 1671.0,753.0 1668.4,758.4 1670.7,761.5 1671.3,763.0 1674.7,766.8 1677.5,768.3 1676.7,769.8 1672.7,769.5 1668.4,770.1 1666.2,772.9 1663.6,774.4 1661.0,777.0 1664.5,772.9 1660.2,772.1 1659.3,771.0 1654.8,770.2 1650.8,770.2 1646.8,772.1 1650.5,776.2 1648.0,775.1 1648.2,777.7 1645.1,775.1 1645.1,777.7 1642.6,772.9 1640.6,775.1 1641.1,778.1 1644.8,783.6 1642.6,782.5 1640.3,785.8 1646.3,787.6 1648.8,790.5 1648.5,794.5 1646.8,792.7 1642.8,792.7 1644.6,795.6 1641.7,795.2 1642.8,799.1 1644.0,803.0 1640.3,800.9 1640.0,803.4 1637.7,799.1 1636.6,801.1 1635.4,799.9 1633.2,794.9 1632.3,792.3 1635.4,790.2 1633.7,789.4 1630.0,785.1 1627.2,781.0 1625.8,778.4 1621.8,774.4 1622.6,767.6 1622.4,763.4 1620.7,761.5 1617.5,759.2 1615.0,757.3 1611.0,754.5 1605.6,750.6 1602.5,749.1 1598.8,745.9 1597.6,742.7 1596.8,738.7 1594.2,736.3 1590.8,739.9 1589.4,737.1 1588.8,735.1 1590.2,733.5 1589.1,732.2 1582.3,735.5 1583.1,739.1 1582.0,743.5 1583.7,746.3 1588.8,749.8 1593.1,758.8 1597.3,762.3 1603.9,763.0 1602.5,765.3 1608.1,769.1 1614.1,772.5 1617.2,776.2 1616.4,778.8 1614.4,777.0 1609.8,774.0 1606.4,777.3 1605.9,779.2 1609.6,784.0 1606.4,785.4 1606.2,789.1 1603.3,792.5 1601.0,791.2 1602.5,787.6 1603.6,784.7 1603.3,782.1 1601.3,777.3 1599.0,777.3 1596.2,772.5 1593.6,772.9 1593.1,771.0 1589.1,768.3 1586.2,768.3 1583.7,766.4 1581.7,764.2 1579.1,761.5 1575.1,759.2 1571.7,754.9 1570.6,750.2 1567.8,745.9 1562.6,743.5 1560.4,744.3 1557.5,747.5 1554.1,748.7 1551.8,750.2 1549.8,753.0 1545.8,753.8 1542.4,752.2 1539.3,751.8 1535.3,750.6 1533.0,751.4 1529.6,753.8 1529.4,756.9 1530.8,760.0 1524.2,767.2 1519.1,769.1 1516.8,772.1 1512.0,777.3 1510.3,781.4 1513.1,786.5 1509.2,789.4 1508.0,794.5 1502.9,796.3 1499.8,800.9 1498.1,800.2 1492.1,801.3 1487.0,801.3 1481.6,805.2 1480.1,806.2 1476.2,802.7 1472.5,797.7 1467.1,799.1ZM1478.4,807.6 1481.8,806.9 1489.8,811.5 1495.2,811.1 1508.3,808.3 1514.8,805.5 1519.4,802.7 1529.4,800.6 1541.0,800.9 1551.3,799.9 1556.1,799.9 1568.0,797.0 1574.9,798.8 1572.3,803.4 1572.6,807.6 1574.9,809.7 1573.2,814.9 1569.5,820.8 1575.1,823.5 1580.8,827.3 1587.1,827.6 1597.9,831.0 1606.4,839.0 1617.5,843.7 1621.2,845.3 1625.8,841.7 1626.1,833.0 1631.5,828.3 1635.4,827.6 1640.9,828.6 1644.0,832.3 1648.5,833.0 1654.8,835.4 1659.3,836.4 1667.0,838.0 1676.7,841.3 1682.1,839.0 1684.7,837.4 1688.4,836.4 1693.2,837.0 1695.8,838.7 1697.2,847.3 1696.0,849.6 1697.7,852.8 1700.3,857.7 1704.6,864.8 1705.1,868.0 1707.1,872.1 1710.5,878.7 1715.7,885.9 1720.5,896.4 1723.9,912.3 1724.5,915.3 1726.8,919.5 1731.6,921.9 1736.4,936.1 1739.6,939.7 1745.2,945.6 1755.2,951.4 1758.3,957.5 1756.1,959.6 1757.5,959.6 1759.5,961.0 1768.0,966.2 1776.5,964.2 1782.2,962.5 1786.2,962.2 1791.9,961.3 1800.7,957.5 1803.7,958.2 1804.4,966.2 1799.9,974.6 1795.6,980.3 1791.3,988.9 1788.2,995.5 1782.2,1003.2 1770.0,1014.3 1766.6,1016.3 1762.6,1019.7 1754.1,1028.0 1744.7,1039.1 1740.1,1044.2 1737.8,1049.1 1734.4,1054.8 1733.3,1062.8 1735.6,1064.8 1736.1,1070.5 1736.7,1076.8 1737.8,1083.2 1740.7,1084.9 1743.0,1087.2 1742.4,1100.3 1743.5,1109.4 1743.8,1112.6 1739.3,1119.4 1729.0,1125.9 1722.2,1130.1 1718.5,1134.9 1710.3,1141.3 1711.7,1147.6 1712.8,1154.3 1714.2,1165.8 1712.2,1169.8 1703.7,1173.9 1697.5,1178.9 1699.4,1179.3 1699.2,1184.7 1696.6,1194.6 1694.6,1197.2 1688.6,1204.1 1685.2,1210.0 1680.1,1215.6 1670.7,1225.1 1665.0,1229.2 1658.2,1232.2 1653.4,1233.3 1645.1,1232.2 1638.0,1233.3 1625.8,1237.6 1621.5,1234.6 1617.2,1234.3 1616.7,1231.2 1613.8,1225.1 1616.1,1219.0 1612.1,1211.6 1607.9,1200.1 1605.6,1195.9 1598.2,1183.4 1596.2,1173.0 1594.5,1160.2 1594.5,1158.7 1591.4,1153.1 1586.0,1142.2 1584.2,1138.5 1578.8,1125.7 1579.4,1117.0 1581.1,1113.5 1583.1,1103.5 1588.2,1098.3 1589.1,1096.8 1590.8,1090.1 1588.2,1083.2 1587.4,1076.3 1586.5,1070.8 1585.1,1067.4 1582.3,1060.8 1581.4,1057.6 1579.4,1053.3 1572.6,1045.4 1567.8,1040.2 1561.5,1029.7 1565.8,1023.7 1566.6,1020.3 1567.5,1015.5 1568.3,1009.2 1566.3,1003.8 1564.3,1003.2 1560.4,999.8 1552.7,1000.9 1546.1,1001.5 1542.2,997.5 1540.4,994.1 1531.3,989.5 1525.7,989.8 1518.8,991.2 1510.9,994.4 1504.9,996.9 1500.1,998.9 1489.2,996.1 1477.3,997.8 1468.2,1001.2 1460.5,997.5 1450.6,990.1 1438.3,982.9 1436.6,977.5 1434.1,971.7 1428.9,965.4 1423.3,961.3 1419.0,957.2 1416.7,955.2 1417.0,948.8 1412.7,941.4 1418.1,933.8 1421.0,921.3 1418.1,913.5 1415.0,905.0 1415.3,901.9 1421.3,887.2 1429.5,872.1 1435.8,865.7 1438.6,860.3 1447.4,856.7 1454.0,850.9 1457.4,844.3 1455.7,842.7 1456.2,837.0 1459.4,831.7 1463.6,825.2 1468.8,822.8 1473.0,820.1 1477.0,811.8ZM1792.2,1094.8 1786.8,1102.9 1782.2,1110.6 1775.4,1116.5 1768.0,1118.2 1763.4,1124.2 1762.3,1133.1 1764.6,1142.2 1758.9,1151.3 1759.5,1160.5 1761.7,1169.8 1768.0,1175.5 1777.1,1174.2 1781.1,1169.8 1784.5,1157.4 1787.9,1145.2 1793.0,1133.1 1794.2,1124.2 1795.3,1117.6 1798.7,1114.1 1797.0,1106.4 1795.3,1099.4ZM1403.9,555.9 1393.7,550.8 1382.9,550.8 1386.8,544.3 1376.0,537.7 1384.0,533.6 1373.2,528.2 1378.3,518.4 1384.0,515.6 1390.8,526.8 1396.5,524.0 1403.9,519.9 1412.4,518.4 1419.8,514.2 1427.8,517.0 1434.6,528.2 1432.4,540.3 1423.8,545.6 1416.4,550.8ZM1479.6,696.1 1483.0,693.9 1484.1,691.2 1486.4,687.6 1492.1,685.8 1496.6,683.1 1491.0,682.2 1484.1,682.2 1482.4,678.5 1486.4,677.6 1488.7,672.9 1485.3,671.0 1485.8,666.3 1493.2,666.3 1494.9,664.4 1495.5,659.6 1493.2,657.6 1491.5,653.7 1492.1,650.8 1484.1,651.8 1484.7,646.8 1484.1,640.7 1479.6,645.8 1479.6,636.7 1476.7,632.5 1479.0,625.2 1480.7,619.9 1483.6,612.3 1494.4,612.3 1489.8,618.8 1488.7,623.1 1500.6,622.0 1500.1,628.4 1496.1,635.6 1493.2,639.7 1497.8,639.7 1502.3,643.8 1504.0,650.8 1508.6,654.7 1511.4,658.6 1512.6,662.5 1513.7,667.2 1512.6,670.1 1518.3,669.6 1522.0,672.9 1520.5,678.5 1517.1,681.2 1516.0,684.0 1520.0,684.0 1519.4,686.7 1517.1,688.5 1513.1,689.9 1506.3,689.4 1500.6,691.2 1494.9,690.3 1491.5,693.9 1487.5,693.9ZM1456.2,683.1 1452.8,677.6 1456.8,672.9 1457.4,667.2 1454.5,664.4 1455.1,657.6 1463.1,656.7 1462.5,652.7 1467.1,647.3 1473.3,646.8 1477.3,647.8 1480.1,653.7 1477.3,658.6 1477.3,665.3 1476.7,672.0 1475.6,676.6 1469.3,677.6 1464.8,680.3ZM1579.7,653.7 1575.7,647.8 1574.6,642.8 1579.1,639.7 1583.1,638.7 1583.7,643.8 1582.0,647.8 1580.8,651.8ZM1572.9,649.3 1568.3,648.8 1567.8,644.8 1571.7,643.8 1573.4,646.8ZM1615.5,630.5 1615.0,625.2 1620.1,619.9 1619.5,624.2ZM1637.2,618.8 1636.6,613.4 1642.8,612.3 1643.4,615.6ZM1582.8,792.7 1587.7,790.5 1594.5,792.0 1600.7,790.2 1597.9,795.6 1597.9,801.3 1591.6,798.4 1584.2,795.6ZM1559.8,784.7 1559.8,775.1 1564.3,768.3 1567.8,773.6 1566.6,783.2 1563.2,785.4ZM1564.3,766.8 1560.9,762.3 1561.5,757.6 1565.5,754.5 1566.3,762.3ZM1645.7,811.8 1646.3,809.0 1653.7,810.4 1661.6,811.1 1658.8,813.2 1652.5,813.6ZM1696.3,815.3 1695.8,812.2 1701.4,810.8 1708.8,808.3 1704.9,812.5 1699.7,816.0ZM1651.4,792.0 1646.3,787.6 1644.0,784.7 1649.1,786.9ZM1529.1,782.5 1525.7,780.3 1530.2,777.7 1531.3,781.0ZM1827.7,450.2 1839.1,448.5 1833.4,432.6 1827.7,416.0 1833.4,400.6 1844.8,382.3 1856.2,360.7 1876.1,342.4 1901.7,320.5 1901.7,337.6 1876.1,358.4 1853.3,375.9 1836.3,396.6 1813.5,410.3 1807.8,429.0 1816.4,443.3ZM1605.9,328.0 1591.6,305.1 1580.3,286.2 1574.6,263.1 1577.4,238.4 1603.0,231.9 1617.2,251.0 1631.5,269.1 1620.1,286.2 1614.4,305.1 1608.7,318.0ZM1625.8,254.1 1620.1,225.3 1645.7,218.5 1665.6,231.9 1654.2,251.0ZM1637.2,310.3 1631.5,291.7 1645.7,286.2 1651.4,302.5ZM30.0,291.7 4.4,263.1 -6.9,231.9 7.3,193.8 27.2,215.1 55.6,247.9 61.3,277.7 44.3,291.7ZM2078.0,291.7 2052.4,263.1 2041.1,231.9 2055.3,193.8 2075.2,215.1 2103.6,247.9 2109.3,277.7 2092.3,291.7ZM246.2,369.5 249.1,353.9 266.1,340.0 288.9,349.4 283.2,365.1 263.3,371.6ZM2294.2,369.5 2297.1,353.9 2314.1,340.0 2336.9,349.4 2331.2,365.1 2311.3,371.6ZM269.0,402.5 263.3,388.5 280.4,390.5 280.4,400.6ZM2317.0,402.5 2311.3,388.5 2328.4,390.5 2328.4,400.6ZM300.3,369.5 306.0,356.2 320.2,365.1ZM2348.3,369.5 2354.0,356.2 2368.2,365.1ZM481.2,445.0 485.2,436.2 499.4,434.4 502.2,443.3ZM1787.9,479.8 1789.0,470.2 1796.4,471.8 1794.7,479.8ZM1785.1,221.9 1779.4,204.6 1824.9,197.4 1853.3,211.6 1830.6,225.3ZM1850.5,465.3 1845.9,453.6 1853.3,457.0ZM271.8,730.6 271.3,724.8 273.0,713.9 272.4,705.3 272.4,692.1 270.1,680.3 270.7,666.3 274.7,656.7 276.9,657.6 279.2,671.0 280.4,687.6 284.3,702.7 277.5,706.2 277.5,718.1 279.2,724.0 279.8,729.8ZM2319.8,730.6 2319.3,724.8 2321.0,713.9 2320.4,705.3 2320.4,692.1 2318.1,680.3 2318.7,666.3 2322.7,656.7 2324.9,657.6 2327.2,671.0 2328.4,687.6 2332.3,702.7 2325.5,706.2 2325.5,718.1 2327.2,724.0 2327.8,729.8ZM260.4,766.1 259.3,757.6 262.7,752.2 270.1,743.5 271.3,734.7 280.4,744.3 290.0,746.7 293.4,752.2 286.0,754.5 279.2,762.3 269.0,757.6 262.2,760.0 266.7,763.8ZM2308.4,766.1 2307.3,757.6 2310.7,752.2 2318.1,743.5 2319.3,734.7 2328.4,744.3 2338.0,746.7 2341.4,752.2 2334.0,754.5 2327.2,762.3 2317.0,757.6 2310.2,760.0 2314.7,763.8ZM209.2,820.1 214.9,813.2 221.8,809.0 229.2,809.0 237.1,808.3 241.7,801.3 242.2,797.0 245.1,795.6 244.5,800.6 250.8,797.7 254.2,792.0 259.9,784.7 259.9,777.3 262.2,768.3 266.1,766.1 270.1,773.6 271.8,781.0 269.0,789.8 266.1,799.1 264.4,806.2 262.2,811.8 259.9,813.2 259.3,809.0 255.9,811.8 253.6,815.3 250.2,816.0 245.1,815.3 242.8,813.2 242.2,818.0 236.6,823.5 232.6,818.0 233.7,815.3 226.3,816.0 220.6,818.0 214.9,820.1ZM2257.2,820.1 2262.9,813.2 2269.8,809.0 2277.2,809.0 2285.1,808.3 2289.7,801.3 2290.2,797.0 2293.1,795.6 2292.5,800.6 2298.8,797.7 2302.2,792.0 2307.9,784.7 2307.9,777.3 2310.2,768.3 2314.1,766.1 2318.1,773.6 2319.8,781.0 2317.0,789.8 2314.1,799.1 2312.4,806.2 2310.2,811.8 2307.9,813.2 2307.3,809.0 2303.9,811.8 2301.6,815.3 2298.2,816.0 2293.1,815.3 2290.8,813.2 2290.2,818.0 2284.6,823.5 2280.6,818.0 2281.7,815.3 2274.3,816.0 2268.6,818.0 2262.9,820.1ZM207.5,840.4 204.7,837.7 203.6,831.7 201.8,828.3 203.0,823.5 208.7,820.8 212.7,823.5 214.9,828.3 212.1,835.0 209.8,838.4ZM2255.5,840.4 2252.7,837.7 2251.6,831.7 2249.8,828.3 2251.0,823.5 2256.7,820.8 2260.7,823.5 2262.9,828.3 2260.1,835.0 2257.8,838.4ZM218.9,828.3 216.1,824.2 220.6,819.4 228.6,818.0 230.3,821.5 227.4,824.9 223.5,823.5ZM2266.9,828.3 2264.1,824.2 2268.6,819.4 2276.6,818.0 2278.3,821.5 2275.4,824.9 2271.5,823.5ZM151.2,897.7 147.8,893.3 148.9,885.3 154.1,878.4 157.5,879.0 156.3,885.3 153.5,892.7ZM2199.2,897.7 2195.8,893.3 2196.9,885.3 2202.1,878.4 2205.5,879.0 2204.3,885.3 2201.5,892.7ZM86.9,920.7 82.4,918.9 81.8,914.1 87.5,909.8 94.9,909.8 93.2,914.7 90.3,918.9ZM2134.9,920.7 2130.4,918.9 2129.8,914.1 2135.5,909.8 2142.9,909.8 2141.2,914.7 2138.3,918.9ZM1970.0,992.1 1966.3,986.7 1966.0,979.2 1967.7,970.0 1973.9,976.9 1977.6,984.9 1975.1,990.1ZM150.6,946.7 148.4,941.4 146.7,939.7 145.5,932.0 148.4,933.2 148.9,924.9 151.2,918.3 159.2,918.9 160.3,926.1 156.9,933.8 155.2,939.7 156.9,944.4 161.5,945.6 167.7,946.1 170.0,951.4 168.3,953.2 163.7,947.9 159.8,948.5 156.3,946.1ZM2198.6,946.7 2196.4,941.4 2194.7,939.7 2193.5,932.0 2196.4,933.2 2196.9,924.9 2199.2,918.3 2207.2,918.9 2208.3,926.1 2204.9,933.8 2203.2,939.7 2204.9,944.4 2209.5,945.6 2215.7,946.1 2218.0,951.4 2216.3,953.2 2211.7,947.9 2207.8,948.5 2204.3,946.1ZM152.9,955.5 148.9,949.1 154.1,949.1 155.2,953.7ZM2200.9,955.5 2196.9,949.1 2202.1,949.1 2203.2,953.7ZM175.1,962.5 171.1,954.3 176.8,954.3 179.1,962.5 176.2,967.1 174.0,968.8 172.3,963.6ZM2223.1,962.5 2219.1,954.3 2224.8,954.3 2227.1,962.5 2224.2,967.1 2222.0,968.8 2220.3,963.6ZM158.0,965.9 158.0,958.4 164.3,960.1 161.5,964.8ZM2206.0,965.9 2206.0,958.4 2212.3,960.1 2209.5,964.8ZM163.7,974.0 160.3,969.4 163.7,963.6 169.4,961.9 167.1,968.8 166.0,971.7ZM2211.7,974.0 2208.3,969.4 2211.7,963.6 2217.4,961.9 2215.1,968.8 2214.0,971.7ZM130.7,978.0 134.7,972.9 141.0,965.9 143.8,961.3 141.5,968.8 135.9,974.6ZM2178.7,978.0 2182.7,972.9 2189.0,965.9 2191.8,961.3 2189.5,968.8 2183.9,974.6ZM177.4,994.1 170.6,991.8 169.4,986.1 166.0,982.6 158.6,986.7 159.8,981.5 165.4,978.0 172.3,976.9 178.0,974.6 178.0,970.0 182.5,977.5 183.6,984.9 181.4,990.1 178.5,986.7 179.1,991.8ZM2225.4,994.1 2218.6,991.8 2217.4,986.1 2214.0,982.6 2206.6,986.7 2207.8,981.5 2213.4,978.0 2220.3,976.9 2226.0,974.6 2226.0,970.0 2230.5,977.5 2231.6,984.9 2229.4,990.1 2226.5,986.7 2227.1,991.8ZM84.1,1017.5 87.5,1014.6 92.1,1016.3 95.5,1017.5 97.2,1011.2 104.0,1008.9 110.8,1003.2 115.9,998.1 123.9,992.4 128.5,986.1 133.6,988.9 142.1,995.8 138.1,1001.5 133.6,1002.1 131.9,1007.2 134.7,1013.5 140.4,1020.3 134.2,1021.4 132.4,1028.8 127.9,1033.4 126.8,1039.7 124.5,1046.5 118.2,1048.8 115.4,1045.4 106.8,1044.8 100.0,1045.4 91.5,1042.5 89.8,1033.4 85.2,1027.1 83.5,1021.4ZM2132.1,1017.5 2135.5,1014.6 2140.1,1016.3 2143.5,1017.5 2145.2,1011.2 2152.0,1008.9 2158.8,1003.2 2163.9,998.1 2171.9,992.4 2176.5,986.1 2181.6,988.9 2190.1,995.8 2186.1,1001.5 2181.6,1002.1 2179.9,1007.2 2182.7,1013.5 2188.4,1020.3 2182.2,1021.4 2180.4,1028.8 2175.9,1033.4 2174.8,1039.7 2172.5,1046.5 2166.2,1048.8 2163.4,1045.4 2154.8,1044.8 2148.0,1045.4 2139.5,1042.5 2137.8,1033.4 2133.2,1027.1 2131.5,1021.4ZM6.2,994.1 18.7,996.4 23.2,1002.1 30.0,1007.2 37.4,1014.1 46.5,1018.6 53.9,1024.3 57.9,1031.7 67.0,1039.1 67.0,1044.2 66.5,1051.6 65.3,1059.6 59.1,1057.3 51.7,1051.6 45.4,1045.9 38.6,1038.5 34.6,1031.1 28.3,1024.3 25.5,1016.9 19.8,1012.9 14.1,1004.9 7.3,999.2ZM2054.2,994.1 2066.7,996.4 2071.2,1002.1 2078.0,1007.2 2085.4,1014.1 2094.5,1018.6 2101.9,1024.3 2105.9,1031.7 2115.0,1039.1 2115.0,1044.2 2114.5,1051.6 2113.3,1059.6 2107.1,1057.3 2099.7,1051.6 2093.4,1045.9 2086.6,1038.5 2082.6,1031.1 2076.3,1024.3 2073.5,1016.9 2067.8,1012.9 2062.1,1004.9 2055.3,999.2ZM66.5,1060.2 72.7,1060.8 80.1,1061.9 82.4,1064.8 91.5,1065.3 94.9,1062.5 104.6,1065.3 109.7,1069.9 114.8,1069.9 115.4,1075.7 106.8,1073.4 97.2,1072.8 85.8,1069.9 79.5,1070.5 69.9,1068.2 64.2,1064.8ZM2114.5,1060.2 2120.7,1060.8 2128.1,1061.9 2130.4,1064.8 2139.5,1065.3 2142.9,1062.5 2152.6,1065.3 2157.7,1069.9 2162.8,1069.9 2163.4,1075.7 2154.8,1073.4 2145.2,1072.8 2133.8,1069.9 2127.5,1070.5 2117.9,1068.2 2112.2,1064.8ZM115.4,1072.8 122.2,1072.2 127.9,1073.4 134.7,1072.8 140.4,1073.4 140.4,1076.3 129.6,1077.4 122.8,1076.3 118.8,1076.3ZM2163.4,1072.8 2170.2,1072.2 2175.9,1073.4 2182.7,1072.8 2188.4,1073.4 2188.4,1076.3 2177.6,1077.4 2170.8,1076.3 2166.8,1076.3ZM146.1,1073.4 155.2,1072.8 163.7,1072.8 167.1,1074.0 162.6,1076.8 152.4,1076.8 146.1,1076.3ZM2194.1,1073.4 2203.2,1072.8 2211.7,1072.8 2215.1,1074.0 2210.6,1076.8 2200.4,1076.8 2194.1,1076.3ZM141.0,1079.7 147.8,1079.7 151.2,1084.3 144.4,1083.8ZM2189.0,1079.7 2195.8,1079.7 2199.2,1084.3 2192.4,1083.8ZM166.6,1084.9 169.4,1079.1 178.0,1074.5 186.5,1074.0 181.9,1078.0 174.0,1082.6ZM2214.6,1084.9 2217.4,1079.1 2226.0,1074.5 2234.5,1074.0 2229.9,1078.0 2222.0,1082.6ZM143.8,1057.9 144.4,1048.8 140.4,1043.1 142.7,1034.5 145.5,1026.0 148.4,1020.9 155.2,1020.3 163.7,1020.3 174.5,1016.9 176.2,1020.3 171.1,1023.7 160.9,1023.2 151.2,1023.2 147.2,1030.6 154.1,1031.7 163.2,1030.6 165.4,1035.1 155.8,1031.7 154.6,1036.8 159.2,1041.4 159.8,1045.9 163.2,1051.6 161.5,1057.3 155.8,1053.3 155.2,1048.8 152.4,1041.9 148.4,1041.4 148.9,1048.8 148.9,1057.3ZM2191.8,1057.9 2192.4,1048.8 2188.4,1043.1 2190.7,1034.5 2193.5,1026.0 2196.4,1020.9 2203.2,1020.3 2211.7,1020.3 2222.5,1016.9 2224.2,1020.3 2219.1,1023.7 2208.9,1023.2 2199.2,1023.2 2195.2,1030.6 2202.1,1031.7 2211.2,1030.6 2213.4,1035.1 2203.8,1031.7 2202.6,1036.8 2207.2,1041.4 2207.8,1045.9 2211.2,1051.6 2209.5,1057.3 2203.8,1053.3 2203.2,1048.8 2200.4,1041.9 2196.4,1041.4 2196.9,1048.8 2196.9,1057.3ZM191.6,1030.6 189.9,1022.0 191.6,1014.1 196.2,1020.3 196.2,1024.3 194.5,1030.6ZM2239.6,1030.6 2237.9,1022.0 2239.6,1014.1 2244.2,1020.3 2244.2,1024.3 2242.5,1030.6ZM192.2,1044.8 200.7,1041.9 208.1,1044.2 203.6,1047.6ZM2240.2,1044.8 2248.7,1041.9 2256.1,1044.2 2251.6,1047.6ZM181.4,1044.2 187.1,1043.6 185.4,1047.6ZM2229.4,1044.2 2235.1,1043.6 2233.4,1047.6ZM210.4,1030.6 217.2,1028.3 225.7,1030.0 227.4,1038.5 232.0,1044.8 240.5,1039.1 247.9,1034.5 257.6,1037.4 266.1,1040.8 277.5,1044.8 287.2,1048.8 293.4,1055.6 302.5,1060.2 304.8,1064.2 304.2,1070.5 312.8,1077.4 320.2,1084.3 317.3,1086.6 306.0,1083.2 300.3,1080.3 294.6,1071.7 286.0,1070.5 278.6,1077.4 266.1,1078.0 254.8,1072.8 247.4,1073.4 253.6,1067.1 249.1,1060.2 242.2,1053.9 232.0,1049.9 223.5,1048.2 218.9,1043.1 219.5,1048.8 214.9,1041.9 216.6,1038.5 224.0,1038.5 214.9,1034.5 208.7,1034.0ZM2258.4,1030.6 2265.2,1028.3 2273.7,1030.0 2275.4,1038.5 2280.0,1044.8 2288.5,1039.1 2295.9,1034.5 2305.6,1037.4 2314.1,1040.8 2325.5,1044.8 2335.2,1048.8 2341.4,1055.6 2350.5,1060.2 2352.8,1064.2 2352.2,1070.5 2360.8,1077.4 2368.2,1084.3 2365.3,1086.6 2354.0,1083.2 2348.3,1080.3 2342.6,1071.7 2334.0,1070.5 2326.6,1077.4 2314.1,1078.0 2302.8,1072.8 2295.4,1073.4 2301.6,1067.1 2297.1,1060.2 2290.2,1053.9 2280.0,1049.9 2271.5,1048.2 2266.9,1043.1 2267.5,1048.8 2262.9,1041.9 2264.6,1038.5 2272.0,1038.5 2262.9,1034.5 2256.7,1034.0ZM308.2,1057.3 320.2,1054.5 329.8,1049.9 329.3,1054.5 320.2,1061.3 311.6,1061.9ZM2356.2,1057.3 2368.2,1054.5 2377.8,1049.9 2377.3,1054.5 2368.2,1061.3 2359.6,1061.9ZM321.9,1040.8 328.7,1045.9 334.4,1052.8 331.6,1049.9 323.0,1043.1ZM2369.9,1040.8 2376.7,1045.9 2382.4,1052.8 2379.6,1049.9 2371.0,1043.1ZM343.5,1056.8 350.9,1064.8 346.9,1063.1ZM2391.5,1056.8 2398.9,1064.8 2394.9,1063.1ZM368.5,1071.7 378.8,1080.3 374.2,1082.0 366.3,1074.5ZM2416.5,1071.7 2426.8,1080.3 2422.2,1082.0 2414.3,1074.5ZM274.7,1087.2 278.6,1094.8 282.1,1109.4 288.3,1109.4 291.7,1118.2 294.0,1124.2 298.0,1136.1 307.7,1142.2 312.8,1148.2 321.3,1157.4 324.7,1165.5 332.1,1173.0 335.0,1182.4 337.8,1193.3 335.5,1205.0 332.1,1218.3 324.2,1231.2 320.7,1240.2 317.3,1252.9 316.8,1256.4 306.0,1259.3 296.3,1265.8 288.9,1262.2 286.0,1262.2 280.4,1265.8 271.8,1262.2 264.4,1260.0 259.3,1252.9 256.5,1243.7 250.2,1243.0 251.9,1235.3 247.4,1240.2 246.8,1231.9 247.9,1222.4 242.2,1230.5 237.1,1238.1 233.1,1231.9 226.9,1225.1 220.6,1218.3 209.2,1215.0 197.9,1216.3 186.5,1220.3 175.1,1224.4 166.6,1231.2 155.2,1231.2 143.8,1234.6 134.7,1238.8 123.9,1237.4 118.8,1234.0 118.8,1228.5 122.5,1218.3 118.8,1208.3 115.9,1197.2 110.8,1185.6 108.6,1180.5 113.1,1176.1 109.1,1169.8 110.8,1158.0 113.7,1153.1 121.1,1151.3 128.5,1146.4 138.7,1144.0 149.5,1141.0 158.0,1133.1 159.2,1125.4 163.7,1121.2 167.1,1124.2 171.7,1118.2 176.2,1111.1 183.6,1106.4 189.3,1106.4 193.9,1111.1 200.7,1112.3 203.0,1103.5 208.1,1097.1 214.9,1095.4 214.9,1090.1 220.6,1091.9 229.2,1094.8 237.7,1095.9 242.8,1094.8 237.7,1102.4 234.8,1111.1 240.5,1115.3 247.9,1120.0 254.8,1123.0 260.4,1127.7 265.6,1127.1 268.4,1118.2 269.5,1106.4 270.1,1097.7 272.4,1089.0ZM2322.7,1087.2 2326.6,1094.8 2330.1,1109.4 2336.3,1109.4 2339.7,1118.2 2342.0,1124.2 2346.0,1136.1 2355.7,1142.2 2360.8,1148.2 2369.3,1157.4 2372.7,1165.5 2380.1,1173.0 2383.0,1182.4 2385.8,1193.3 2383.5,1205.0 2380.1,1218.3 2372.2,1231.2 2368.7,1240.2 2365.3,1252.9 2364.8,1256.4 2354.0,1259.3 2344.3,1265.8 2336.9,1262.2 2334.0,1262.2 2328.4,1265.8 2319.8,1262.2 2312.4,1260.0 2307.3,1252.9 2304.5,1243.7 2298.2,1243.0 2299.9,1235.3 2295.4,1240.2 2294.8,1231.9 2295.9,1222.4 2290.2,1230.5 2285.1,1238.1 2281.1,1231.9 2274.9,1225.1 2268.6,1218.3 2257.2,1215.0 2245.9,1216.3 2234.5,1220.3 2223.1,1224.4 2214.6,1231.2 2203.2,1231.2 2191.8,1234.6 2182.7,1238.8 2171.9,1237.4 2166.8,1234.0 2166.8,1228.5 2170.5,1218.3 2166.8,1208.3 2163.9,1197.2 2158.8,1185.6 2156.6,1180.5 2161.1,1176.1 2157.1,1169.8 2158.8,1158.0 2161.7,1153.1 2169.1,1151.3 2176.5,1146.4 2186.7,1144.0 2197.5,1141.0 2206.0,1133.1 2207.2,1125.4 2211.7,1121.2 2215.1,1124.2 2219.7,1118.2 2224.2,1111.1 2231.6,1106.4 2237.3,1106.4 2241.9,1111.1 2248.7,1112.3 2251.0,1103.5 2256.1,1097.1 2262.9,1095.4 2262.9,1090.1 2268.6,1091.9 2277.2,1094.8 2285.7,1095.9 2290.8,1094.8 2285.7,1102.4 2282.8,1111.1 2288.5,1115.3 2295.9,1120.0 2302.8,1123.0 2308.4,1127.7 2313.6,1127.1 2316.4,1118.2 2317.5,1106.4 2318.1,1097.7 2320.4,1089.0ZM287.2,1280.6 297.4,1281.4 307.1,1282.2 307.7,1291.3 304.8,1299.0 299.1,1302.2 293.4,1299.0 290.0,1289.7ZM2335.2,1280.6 2345.4,1281.4 2355.1,1282.2 2355.7,1291.3 2352.8,1299.0 2347.1,1302.2 2341.4,1299.0 2338.0,1289.7ZM446.5,1234.6 455.0,1240.9 458.4,1247.9 464.1,1251.4 466.4,1257.1 474.9,1257.9 479.5,1257.1 476.6,1265.1 470.9,1270.2 469.2,1276.9 461.3,1285.9 458.4,1284.4 460.7,1278.4 459.0,1273.9 452.7,1269.5 456.7,1266.6 458.4,1258.6 456.7,1252.1 452.2,1245.8ZM447.0,1278.4 453.9,1282.2 453.3,1289.7 448.2,1297.5 447.6,1304.5 438.5,1308.5 435.1,1320.6 428.3,1326.3 420.9,1325.5 412.3,1323.0 414.0,1313.3 421.4,1305.3 432.8,1297.5 439.1,1288.2 443.1,1280.6ZM397.0,1142.8 407.2,1150.1 414.0,1156.8 408.4,1153.1 399.8,1146.4ZM472.6,1126.5 480.0,1126.5 479.5,1131.3 473.2,1131.3ZM1815.8,954.9 1819.2,953.2 1822.0,954.3ZM1295.8,1392.4 1304.4,1394.4 1307.8,1400.2 1300.4,1397.3ZM1904.5,1344.1 1912.5,1346.7 1911.4,1351.9 1904.0,1351.0ZM303.7,738.7 309.4,734.7 302.0,740.3ZM2351.7,738.7 2357.4,734.7 2350.0,740.3ZM292.3,748.3 296.3,743.5 291.2,747.5ZM2340.3,748.3 2344.3,743.5 2339.2,747.5ZM1735.6,1062.5 1735.6,1059.1 1737.0,1060.8ZM418.0,1328.0 420.3,1331.3 421.4,1329.7ZM63.6,1035.1 68.2,1037.9 70.4,1043.1 65.3,1039.7ZM2111.6,1035.1 2116.2,1037.9 2118.4,1043.1 2113.3,1039.7ZM17.0,1018.0 20.4,1022.6 17.5,1020.3ZM2065.0,1018.0 2068.4,1022.6 2065.5,1020.3ZM25.5,1031.7 28.3,1036.2 25.5,1034.0ZM2073.5,1031.7 2076.3,1036.2 2073.5,1034.0ZM180.2,1069.4 185.4,1070.5 181.9,1071.4ZM2228.2,1069.4 2233.4,1070.5 2229.9,1071.4ZM228.6,1056.8 229.7,1064.8 226.9,1061.3ZM2276.6,1056.8 2277.7,1064.8 2274.9,1061.3ZM213.2,1067.1 212.1,1071.1 210.4,1069.4ZM2261.2,1067.1 2260.1,1071.1 2258.4,1069.4ZM235.4,1030.6 239.4,1032.3 236.6,1032.8ZM2283.4,1030.6 2287.4,1032.3 2284.6,1032.8ZM298.0,1037.4 302.0,1037.9 299.1,1038.5ZM2346.0,1037.4 2350.0,1037.9 2347.1,1038.5ZM1080.2,1586.7 1077.9,1598.4 1085.3,1597.5ZM-1560.0,1700.0 -1560.0,1645.6 -952.4,1645.6 -950.2,1601.8 -945.0,1586.7 -938.8,1572.2 -930.2,1556.9 -921.7,1543.6 -910.3,1528.0 -899.0,1514.3 -885.9,1503.8 -870.5,1494.8 -860.3,1493.6 -864.8,1503.8 -876.2,1511.7 -883.0,1523.8 -885.9,1533.6 -883.0,1552.4 -881.9,1567.6 -883.0,1583.4 -881.9,1603.5 -880.2,1645.6 -649.8,1645.6 -627.0,1626.6 -607.1,1612.2 -592.9,1603.5 -581.5,1595.0 -564.4,1596.7 -550.2,1590.0 -533.2,1588.3 -518.9,1595.0 -504.7,1591.7 -487.6,1590.0 -473.4,1585.1 -462.0,1590.0 -447.8,1585.1 -433.6,1590.0 -416.5,1593.3 -402.3,1596.7 -388.1,1590.0 -365.3,1585.1 -345.4,1573.8 -328.4,1583.4 -317.0,1585.1 -308.4,1570.7 -294.2,1559.9 -280.0,1555.4 -265.8,1552.4 -254.4,1543.6 -243.0,1530.7 -228.8,1528.0 -214.6,1535.0 -206.0,1545.0 -191.8,1550.9 -177.6,1553.9 -160.5,1556.9 -143.5,1556.9 -136.1,1567.6 -129.2,1586.7 -117.9,1588.3 -106.5,1575.4 -98.0,1578.6 -89.4,1567.6 -75.2,1556.9 -66.7,1547.9 -46.8,1542.1 -29.7,1540.7 -12.6,1537.8 1.6,1533.6 13.0,1522.5 32.9,1528.0 47.1,1526.6 61.3,1533.6 78.4,1537.8 92.6,1535.0 106.8,1529.4 121.1,1536.4 138.1,1543.6 155.2,1539.2 175.1,1535.0 192.2,1532.1 209.2,1533.6 226.3,1530.7 240.5,1536.4 260.4,1540.7 277.5,1543.6 291.7,1552.4 303.1,1559.9 317.3,1566.0 334.4,1573.8 351.5,1580.2 368.5,1588.3 382.8,1598.4 397.0,1605.2 414.0,1608.7 432.8,1615.8 436.8,1645.6 488.0,1645.6 488.0,1700.0ZM488.0,1700.0 488.0,1645.6 1095.6,1645.6 1097.8,1601.8 1103.0,1586.7 1109.2,1572.2 1117.8,1556.9 1126.3,1543.6 1137.7,1528.0 1149.0,1514.3 1162.1,1503.8 1177.5,1494.8 1187.7,1493.6 1183.2,1503.8 1171.8,1511.7 1165.0,1523.8 1162.1,1533.6 1165.0,1552.4 1166.1,1567.6 1165.0,1583.4 1166.1,1603.5 1167.8,1645.6 1398.2,1645.6 1421.0,1626.6 1440.9,1612.2 1455.1,1603.5 1466.5,1595.0 1483.6,1596.7 1497.8,1590.0 1514.8,1588.3 1529.1,1595.0 1543.3,1591.7 1560.4,1590.0 1574.6,1585.1 1586.0,1590.0 1600.2,1585.1 1614.4,1590.0 1631.5,1593.3 1645.7,1596.7 1659.9,1590.0 1682.7,1585.1 1702.6,1573.8 1719.6,1583.4 1731.0,1585.1 1739.6,1570.7 1753.8,1559.9 1768.0,1555.4 1782.2,1552.4 1793.6,1543.6 1805.0,1530.7 1819.2,1528.0 1833.4,1535.0 1842.0,1545.0 1856.2,1550.9 1870.4,1553.9 1887.5,1556.9 1904.5,1556.9 1911.9,1567.6 1918.8,1586.7 1930.1,1588.3 1941.5,1575.4 1950.0,1578.6 1958.6,1567.6 1972.8,1556.9 1981.3,1547.9 2001.2,1542.1 2018.3,1540.7 2035.4,1537.8 2049.6,1533.6 2061.0,1522.5 2080.9,1528.0 2095.1,1526.6 2109.3,1533.6 2126.4,1537.8 2140.6,1535.0 2154.8,1529.4 2169.1,1536.4 2186.1,1543.6 2203.2,1539.2 2223.1,1535.0 2240.2,1532.1 2257.2,1533.6 2274.3,1530.7 2288.5,1536.4 2308.4,1540.7 2325.5,1543.6 2339.7,1552.4 2351.1,1559.9 2365.3,1566.0 2382.4,1573.8 2399.5,1580.2 2416.5,1588.3 2430.8,1598.4 2445.0,1605.2 2462.0,1608.7 2480.8,1615.8 2484.8,1645.6 2536.0,1645.6 2536.0,1700.0Z" fill="#cbc9c2" stroke="#cbc9c2" stroke-width="1.2" stroke-linejoin="round"/>
<path d="M1805.0,723.2 1813.5,724.8 1814.6,735.5 1804.4,738.7 1798.2,741.9 1803.0,749.5 1810.7,758.4 1810.7,764.5 1812.9,769.8 1813.5,777.3 1817.5,784.7 1818.6,795.6 1819.2,799.9 1807.8,802.0 1797.6,797.0 1792.5,795.6 1790.2,789.1 1792.5,782.5 1798.2,774.4 1792.5,769.8 1786.8,762.3 1782.2,754.5 1778.8,745.1 1779.4,738.7 1783.4,733.1 1790.8,729.0 1796.4,724.8ZM1030.7,726.5 1025.6,724.8 1017.1,726.5 1011.4,723.2 1011.4,719.0 1002.8,724.0 994.3,724.8 988.1,724.8 994.3,718.1 1002.8,713.9 1004.6,710.5 1011.4,707.1 1019.9,707.9 1025.6,713.9 1029.0,718.1 1030.7,723.2ZM1025.6,730.6 1018.2,732.2 1012.5,740.3 1011.9,754.5 1014.2,764.5 1018.2,764.5 1021.0,754.5 1021.0,742.7 1028.4,735.5 1029.6,732.2ZM1030.7,731.4 1037.0,729.0 1045.5,730.6 1051.2,731.4 1056.9,738.7 1055.2,742.7 1048.4,737.1 1048.9,742.7 1046.6,752.2 1043.2,754.5 1042.1,749.1 1035.3,749.1 1038.1,744.3 1037.5,738.7 1033.0,733.9ZM1037.5,764.5 1042.7,766.8 1047.2,766.1 1056.3,761.5 1063.1,756.1 1059.7,755.3 1054.0,757.6 1046.6,760.0 1039.3,762.3ZM1058.0,752.2 1065.4,753.0 1071.1,752.2 1078.5,750.6 1077.4,745.9 1071.1,747.5 1062.6,748.3 1059.7,749.8ZM960.7,693.0 961.9,683.1 958.5,673.8 952.8,661.5 947.1,664.4 951.6,673.8 955.6,683.1 959.0,692.1ZM844.7,585.2 854.9,587.5 864.6,581.6 877.7,573.3 889.1,563.4 883.4,562.2 869.2,568.4 857.8,570.8 846.4,579.3ZM815.1,535.0 826.5,532.3 840.7,521.3 832.2,508.4 820.8,509.9 810.6,518.4 809.4,526.8ZM880.5,607.9 894.8,604.6 906.1,601.3 889.1,606.8ZM1694.0,1024.3 1702.6,1023.2 1707.1,1027.7 1704.9,1034.5 1699.7,1040.2 1694.0,1041.4 1692.3,1034.5 1692.9,1028.8ZM1678.7,1045.4 1681.5,1054.5 1686.1,1065.9 1688.9,1076.3 1685.5,1072.8 1678.7,1060.2 1678.1,1051.6ZM1705.4,1080.3 1708.8,1091.9 1710.5,1103.5 1712.2,1108.2 1707.7,1105.3 1706.6,1091.9ZM53.9,683.1 64.2,678.5 75.6,669.1 85.8,654.7 88.6,641.8 84.1,646.8 75.6,661.5 67.0,671.0 55.6,680.3ZM2101.9,683.1 2112.2,678.5 2123.6,669.1 2133.8,654.7 2136.6,641.8 2132.1,646.8 2123.6,661.5 2115.0,671.0 2103.6,680.3ZM1688.4,597.9 1696.9,594.5 1698.6,585.2 1688.4,576.9 1682.7,582.8 1687.2,593.3ZM1714.0,586.4 1718.5,576.9 1711.1,564.7 1707.7,570.8 1711.1,581.6ZM1856.7,725.7 1860.2,724.0 1859.0,727.3ZM1930.7,728.1 1937.5,724.4 1947.2,723.2 1958.6,724.8 1962.6,726.5 1958.0,728.1 1947.2,726.9 1938.7,727.7 1932.4,733.9ZM1114.3,1114.1 1120.6,1120.0 1116.6,1120.0ZM1583.1,614.5 1583.1,609.1 1589.4,604.6 1590.5,610.2ZM1025.0,962.5 1023.9,956.6 1029.6,960.1ZM1716.8,1011.8 1716.8,1000.4 1718.5,1000.4 1720.2,1011.8ZM928.9,635.6 931.7,619.9 934.6,624.2ZM1006.8,701.8 1008.5,693.9 1011.4,698.3ZM1945.5,760.7 1951.8,756.5 1957.4,757.6 1952.9,760.3ZM1769.7,797.7 1769.7,790.5 1773.1,794.9ZM1753.8,789.8 1757.8,785.4 1759.5,788.4Z" fill="#92adb8"/></g>

<clipPath id="bclip"><rect x="1512" y="216" width="512" height="810"/><rect x="1000" y="1026" width="512" height="512"/><rect x="2024" y="1026" width="512" height="512"/></clipPath><path clip-path="url(#bclip)" d="M1577.4,609.1 1579.7,599.0 1583.7,585.2 1581.4,578.1 1581.4,573.3 1580.3,557.2 1591.1,548.2 1593.9,533.6 1600.2,519.9 1605.3,507.0 1613.8,492.1 1625.8,484.4 1628.9,475.6M1628.9,475.6 1637.2,484.4 1645.7,492.1 1646.8,502.6 1648.5,509.9 1649.1,524.0M1628.9,475.6 1633.2,471.8 1639.4,481.3 1644.0,482.9 1654.2,479.8 1659.3,466.9 1670.7,460.3 1677.5,465.3 1676.6,475.8M1676.6,475.8 1683.2,468.6 1687.2,463.7M1676.6,475.8 1674.1,484.4 1682.7,492.1 1677.0,507.0 1682.7,521.3 1681.0,535.0 1685.5,548.2 1691.2,560.9 1689.5,567.2 1679.8,579.3 1670.2,591.0M1671.3,602.9 1668.4,609.1 1668.4,621.0 1667.9,624.2 1670.7,631.5 1672.4,637.7 1663.3,642.8M1650.2,619.9 1657.1,619.9 1662.8,623.1 1667.9,624.2M1631.8,638.7 1640.0,635.6 1651.4,636.7 1657.1,639.7 1663.3,642.8 1663.9,647.8 1658.8,651.8 1657.1,657.6 1645.7,660.1M1633.2,646.8 1640.6,649.8 1641.7,655.7 1624.6,656.2M1641.7,655.7 1645.7,660.1 1646.8,672.9 1646.3,677.6 1646.3,683.1 1648.5,693.0 1641.1,700.1 1640.6,705.3M1646.3,683.1 1657.1,682.2 1668.4,684.0 1685.5,684.0 1692.9,677.6M1672.4,637.7 1685.5,642.8 1688.4,651.8 1694.0,659.6 1696.9,667.2 1692.9,677.6 1704.3,674.8 1711.1,684.9 1716.8,693.9 1728.2,696.6 1740.1,703.6 1738.4,713.9 1729.3,721.5M1593.1,660.5 1592.8,671.0 1595.6,680.3 1597.0,687.6 1605.9,693.0 1614.4,696.6 1619.5,701.0 1625.8,702.7 1637.2,702.7 1640.6,705.3M1597.0,687.6 1581.4,693.9 1587.1,705.3 1590.5,708.8 1586.0,717.3 1571.7,718.1 1566.6,717.7 1555.2,717.3 1558.6,705.3 1550.7,703.6 1548.4,701.0M1553.0,667.2 1551.8,675.7 1546.1,680.3 1546.1,689.4 1546.7,695.7 1548.4,701.0M1526.5,687.2 1534.8,692.1 1539.3,697.5 1545.0,701.0 1548.4,701.0M1531.3,684.0 1537.6,684.9 1545.0,685.8 1546.1,689.4M1546.1,729.0 1550.7,727.3 1551.8,731.4 1550.1,737.9 1555.2,745.1 1554.7,748.3M1555.2,717.3 1551.8,719.0 1546.1,729.0M1551.8,731.4 1560.4,730.6 1568.9,726.5 1571.7,724.0 1581.4,722.3 1589.9,725.7M1514.8,756.9 1521.7,758.4 1530.2,759.2M1590.5,708.8 1597.3,707.1 1608.1,707.9 1609.3,713.9 1605.3,722.3 1603.6,723.2M1609.3,713.9 1619.0,715.6 1628.6,712.2 1637.7,710.5 1641.7,713.9 1635.4,722.3 1627.5,729.8 1633.7,738.7 1638.3,741.9 1641.1,745.1M1641.7,713.9 1651.4,714.8 1663.3,712.2 1670.7,722.3 1671.9,730.6 1672.4,734.7M1668.4,710.5 1678.1,714.8 1683.2,726.5 1676.4,727.3 1672.4,734.7M1641.1,745.1 1648.5,749.1 1657.1,749.1 1666.7,745.9 1674.7,748.7M1641.1,745.1 1641.7,753.0 1639.4,760.0 1642.8,767.6 1651.4,766.8 1659.9,767.6 1662.8,763.0 1671.3,762.3M1659.9,767.6 1660.2,772.1M1642.8,767.6 1637.2,769.1 1631.5,770.6 1628.1,777.3 1625.8,779.6M1748.4,766.1 1757.8,768.3 1759.2,769.1 1760.6,776.6 1766.9,779.6 1762.6,781.8 1764.6,789.8 1766.9,797.7 1753.2,797.0 1745.2,798.4 1731.0,801.3 1722.5,799.9 1720.2,802.0 1719.1,804.8 1716.8,806.9M1739.6,751.4 1750.9,753.0 1762.3,757.6 1770.8,758.4 1776.5,763.8 1784.5,768.3 1788.5,763.4M1759.2,769.1 1768.0,767.6 1776.5,767.6 1776.5,763.8M1768.0,767.6 1773.1,775.8 1776.5,781.0 1776.5,785.4 1782.2,781.8 1786.2,782.5 1789.9,788.7M1766.9,797.7 1770.3,806.2 1773.1,813.2 1770.8,820.1 1774.3,826.9 1783.4,833.7 1783.4,840.4 1787.9,847.0M1753.2,797.0 1747.5,802.7 1746.4,813.2 1745.2,817.4 1732.7,824.2 1735.0,831.7 1741.8,834.3 1751.5,839.7 1766.3,852.2 1776.8,852.8 1783.4,846.3 1785.1,847.3M1776.8,852.8 1783.4,856.4 1787.3,856.4M1735.0,831.7 1722.5,833.7 1722.5,837.0 1728.2,843.7 1725.3,847.0 1721.1,847.6 1717.4,852.2 1710.8,851.2M1732.7,824.2 1721.6,831.7 1716.2,829.0M1714.5,829.0 1714.0,837.0 1710.9,849.9M1706.8,838.4 1710.5,850.2M1755.5,931.4 1758.3,925.5 1765.2,925.5 1779.4,926.1 1791.3,918.3 1807.8,915.9 1824.9,909.8 1828.3,897.7 1826.0,893.3 1811.2,891.5 1805.5,884.7M1826.0,893.3 1829.4,884.0 1832.3,879.7 1832.3,875.3M1807.8,915.9 1812.4,926.1 1814.1,929.9M1791.9,727.3 1787.9,723.2 1785.6,715.6 1777.1,710.5 1778.2,702.7 1779.4,697.5 1782.2,693.0 1789.6,691.2 1790.8,697.5 1801.0,681.2 1810.7,681.2 1816.4,683.1 1822.6,691.2 1828.9,687.6 1833.4,690.3 1839.1,686.7 1850.5,688.5 1861.3,690.3 1862.4,684.9 1854.5,678.5 1860.2,669.1 1859.0,662.5 1861.9,659.6 1881.8,658.6 1882.9,655.7 1900.0,655.7 1904.0,647.8 1914.8,645.8 1917.0,657.6 1929.6,659.6 1931.3,665.3 1947.2,660.5 1961.4,675.7 1967.7,689.4 1984.7,686.7 1997.3,697.5 2008.6,703.6M2008.6,703.6 2000.1,708.8 1999.0,720.7 1984.2,722.3 1981.9,734.7 1967.1,738.7 1971.7,753.0 1968.2,760.7 1961.4,756.1 1943.2,756.1 1933.0,753.0 1930.1,758.4 1918.8,756.1 1915.3,760.0 1905.1,766.8 1899.4,771.4 1891.4,768.3 1887.5,762.3 1884.6,754.5 1882.9,749.1 1864.1,750.6 1847.6,734.7 1830.3,738.7 1830.4,767.6 1820.3,760.0 1810.7,763.0M1830.4,767.6 1836.8,767.6 1841.4,760.7 1845.4,758.4 1853.3,760.7 1861.3,768.3 1876.1,784.7 1885.2,790.5 1890.3,796.3M1818.6,797.0 1837.4,790.5 1849.4,797.0 1859.9,802.0 1860.2,809.0 1866.4,811.1 1876.1,806.2 1890.3,796.3 1897.7,797.7 1907.4,799.1 1911.4,795.6 1915.3,789.1 1918.8,793.4 1919.3,801.3 1931.8,796.3 1938.1,797.7M1897.7,797.7 1899.4,788.4 1896.0,781.0 1906.2,776.6 1914.2,772.1M1907.4,776.6 1913.1,781.0 1930.7,781.8 1933.0,788.4 1938.1,797.7M1930.7,781.8 1937.5,774.4 1947.2,773.6 1955.7,769.8 1968.2,760.7M1915.3,760.0 1920.5,766.8 1926.7,768.3 1927.3,773.6 1919.9,775.8 1913.1,777.3M1936.4,799.1 1924.4,800.6 1917.6,806.2 1918.8,813.2 1915.9,820.1 1910.2,820.8 1907.4,826.3 1906.2,833.7 1902.3,836.4 1898.8,835.0 1889.7,838.4 1888.6,847.6 1876.7,850.9 1858.5,847.9M1858.5,847.9 1863.6,838.4 1857.9,830.3 1856.7,822.2 1859.0,818.0 1860.2,809.0M1858.5,847.9 1869.3,856.7 1872.1,865.1 1871.5,868.9 1862.4,877.8M1900.0,887.2 1903.4,883.4 1916.5,883.4 1911.9,874.6 1907.4,868.9 1913.6,860.6 1921.0,860.0 1929.6,847.6 1935.8,840.4 1937.0,830.3 1934.7,826.9 1932.4,818.0 1948.9,814.6 1954.6,809.7M1936.4,799.1 1944.4,806.2 1954.6,809.7 1961.4,818.0 1963.1,830.3 1961.4,839.7 1972.8,845.6M1972.8,845.6 1967.7,854.8 1973.9,857.4 1989.9,863.8 2000.1,868.9 2013.2,870.2M1972.8,845.6 1979.1,844.3 1990.4,852.2 2000.1,858.7 2009.8,860.6 2013.2,860.6 2017.7,864.5 2024.0,858.0M2013.2,870.2 2017.7,877.8 2013.2,883.4 2016.6,890.3 2018.3,897.7M1655.1,836.4 1653.7,847.0 1654.2,852.2 1654.2,897.7 1690.6,897.7 1721.9,897.7M1654.2,897.7 1654.2,909.8 1648.5,909.8 1648.5,912.9 1597.3,891.5 1580.3,888.4 1570.6,882.8 1566.0,871.5 1568.3,861.9 1567.8,852.8 1566.0,845.6 1570.6,839.7 1577.4,833.7 1577.8,825.8M1566.0,845.6 1563.2,833.0 1555.8,826.9 1554.7,818.7 1559.2,816.0 1560.9,799.9M1580.3,888.4 1566.0,894.6 1554.4,904.7 1545.0,912.9 1536.2,915.0 1530.8,915.9 1523.9,908.6 1518.8,903.2 1512.0,898.3M1536.2,915.0 1535.9,932.0 1531.9,937.9 1519.4,937.3 1513.3,939.7 1517.7,949.1 1523.9,953.7 1525.7,957.8 1527.9,954.9 1532.5,959.0 1535.3,951.4 1542.7,946.7 1551.8,951.4 1563.2,949.6 1571.7,952.6 1583.1,949.1 1589.4,947.3M1589.4,947.3 1588.8,943.2 1593.9,935.5 1600.2,928.4 1601.3,910.4 1598.5,903.8 1597.3,891.5M1648.5,912.9 1648.5,935.5 1642.8,935.5 1640.0,945.6 1636.6,953.2 1642.3,963.0 1628.6,974.6 1617.8,980.3 1605.9,983.2 1600.2,983.2 1594.5,977.5 1600.2,968.8 1597.9,963.0 1594.5,954.3 1592.2,950.8M1592.2,950.8 1590.5,960.1 1586.0,971.7 1579.1,986.1 1571.7,988.9 1562.6,992.9 1560.6,999.2M1600.2,983.2 1594.5,991.8 1597.3,1000.4 1603.6,1013.5 1617.8,1006.1 1622.4,996.9 1634.3,1001.5 1640.0,1002.7 1650.8,997.5 1667.9,997.5 1662.8,990.7 1655.9,984.4 1649.7,976.3 1646.3,971.7 1642.3,963.0M1648.5,970.0 1659.9,974.6 1671.3,971.7 1679.8,968.8 1688.4,970.6 1695.8,958.4 1700.9,957.2 1704.9,968.8 1706.0,971.7 1710.0,964.2 1711.1,960.1 1717.4,953.2 1719.9,944.0 1719.1,939.1 1721.9,933.8 1723.6,927.8 1729.9,924.9 1731.6,921.9M1719.9,944.0 1727.6,943.2 1735.0,942.6 1744.7,945.0 1753.2,954.5 1749.8,960.1 1749.8,963.0 1756.3,963.0 1758.0,960.4M1756.3,963.0 1758.9,971.1 1762.3,975.2 1779.4,980.3 1785.1,980.3 1768.0,997.5 1750.9,1003.2 1750.4,1003.5 1736.7,1006.6 1722.5,1002.1 1716.8,1000.7 1716.5,999.8 1712.8,995.8 1710.0,991.8 1702.6,986.1 1700.9,980.3 1704.9,978.0 1706.0,971.7M1750.4,1003.5 1745.2,1010.1 1745.2,1026.0 1748.4,1035.4M1716.5,999.8 1705.4,1002.1 1696.9,1005.5 1688.4,1006.1 1687.5,1006.1 1677.0,1000.4 1667.9,997.5M1705.4,1002.1 1707.7,1006.1 1710.5,1016.3 1708.3,1020.3 1705.4,1024.9 1705.4,1031.7M1687.5,1006.1 1689.5,1012.9 1682.7,1019.2 1681.5,1024.9 1680.4,1031.7M1518.8,991.2 1515.4,986.1 1514.3,977.5 1513.7,968.8 1511.4,962.5M1521.4,990.7 1521.4,983.2 1521.1,974.6 1519.4,968.8 1517.1,963.0 1525.7,957.8M1527.4,989.5 1527.4,980.3 1527.9,974.6 1532.5,968.8 1532.5,959.0M1567.8,1013.5 1576.3,1013.5 1587.7,1013.5 1603.6,1013.5M1567.8,1020.3 1576.3,1020.3 1576.3,1013.5M1587.7,1013.5 1587.1,1018.6 1592.8,1020.3 1591.6,1026.0 1593.9,1031.7M1617.8,1006.1 1615.0,1014.6 1613.3,1026.0 1608.7,1031.7M1055.2,1045.4 1054.6,1050.5 1062.6,1054.5 1064.9,1051.1 1067.1,1043.1 1076.8,1040.2 1083.6,1031.7 1083.6,1026.6 1080.8,1024.3M1083.6,1026.6 1102.4,1038.5 1108.1,1039.7 1113.2,1038.5 1114.1,1049.9 1117.2,1034.5 1116.1,1028.8 1118.9,1022.6M1114.1,1049.9 1109.2,1051.1 1097.3,1055.1 1095.0,1063.6 1091.6,1067.6 1095.6,1079.7 1101.3,1083.2 1110.9,1080.3 1110.4,1089.0 1116.3,1088.7 1121.2,1097.7 1120.0,1106.4 1117.2,1112.3 1119.5,1118.2 1116.6,1127.1 1111.8,1132.2M1116.6,1127.1 1121.7,1136.1 1122.3,1145.2 1124.6,1153.1 1126.0,1159.3 1129.7,1159.3 1135.4,1153.1 1142.2,1155.0 1149.6,1154.3 1155.6,1154.3 1157.6,1145.2 1170.7,1137.9 1175.8,1137.9 1181.2,1143.4M1116.3,1088.7 1121.7,1089.0 1133.1,1082.0 1139.9,1081.4 1140.5,1089.0 1147.9,1097.7 1160.4,1103.5 1167.8,1104.7 1170.1,1120.0 1179.8,1120.0 1182.0,1127.1 1184.3,1130.1 1183.2,1136.1 1181.2,1143.4 1182.6,1155.0 1193.4,1156.2 1196.8,1166.7 1203.1,1166.7 1201.4,1176.7M1155.6,1154.3 1165.0,1163.6 1176.4,1171.1 1184.3,1174.8 1178.6,1187.5 1193.4,1188.2 1201.4,1176.7 1205.4,1176.7 1205.9,1186.9 1193.4,1195.9 1184.3,1206.4 1181.5,1218.3 1179.8,1231.2M1184.3,1206.4 1195.7,1211.0 1204.2,1217.7 1209.4,1222.4 1208.2,1230.2M1129.7,1159.3 1129.1,1168.6 1122.3,1174.8 1123.4,1185.6 1115.5,1195.3 1113.8,1208.3 1112.1,1218.3 1114.9,1227.1 1113.8,1234.0 1111.5,1245.8 1107.5,1256.4 1105.8,1267.3 1103.5,1278.4 1103.5,1289.7 1103.5,1301.4 1105.2,1313.3 1104.1,1325.5 1100.7,1333.9 1096.1,1346.7 1096.1,1361.7 1100.7,1364.4 1103.0,1373.5 1113.8,1373.5 1122.9,1376.3M1121.7,1379.6 1121.7,1401.2M2314.1,1040.8 2314.1,1061.9 2313.3,1065.3 2314.1,1078.0" fill="none" stroke="#b1a3b2" stroke-opacity=".8" stroke-width="1.6" stroke-linejoin="round"/><path d="M266.1,1040.8 L266.1,1078.0" fill="none" stroke="#b1a3b2" stroke-opacity=".8" stroke-width="1.6"/>
<g fill="#e7b837" fill-opacity=".75" stroke="#10162a" stroke-width="4">
<circle cx="1897.2" cy="820.5" r="12"/>
<circle cx="1626.7" cy="768.7" r="12"/>
<circle cx="1525.8" cy="859.9" r="12"/>
<circle cx="1521.1" cy="758.1" r="12"/>
<circle cx="1613.7" cy="1090.1" r="12"/>
<circle cx="1160.4" cy="927.5" r="12"/>
<circle cx="1150.1" cy="1263.0" r="12"/>
<circle cx="1768.2" cy="776.8" r="12"/>
<circle cx="2274.0" cy="1173.8" r="12"/>
<circle cx="1594.8" cy="718.0" r="12"/>
<circle cx="1782.7" cy="776.3" r="12"/>
<circle cx="1075.9" cy="877.6" r="12"/>
<circle cx="1800.1" cy="873.2" r="12"/>
<circle cx="2026.0" cy="887.2" r="12"/>
<circle cx="1173.3" cy="950.3" r="12"/>
<circle cx="1671.0" cy="662.4" r="12"/>
<circle cx="1537.4" cy="692.1" r="12"/>
<circle cx="1008.5" cy="926.7" r="12"/>
<circle cx="1525.2" cy="972.8" r="12"/>
<circle cx="2026.5" cy="863.1" r="12"/>
<circle cx="1150.3" cy="1119.9" r="12"/>
<circle cx="1612.6" cy="747.4" r="12"/>
<circle cx="1639.9" cy="1155.7" r="12"/>
<circle cx="1216.6" cy="1107.8" r="12"/>
<circle cx="2164.7" cy="1001.8" r="12"/>
<circle cx="1657.0" cy="756.6" r="12"/>
<circle cx="1503.1" cy="955.8" r="12"/>
<circle cx="1682.2" cy="1045.2" r="12"/>
<circle cx="2109.3" cy="953.9" r="12"/>
<circle cx="1582.1" cy="1003.8" r="12"/>
<circle cx="967.3" cy="638.4" r="12"/>
<circle cx="1377.9" cy="929.9" r="12"/>
<circle cx="1636.0" cy="988.3" r="12"/>
<circle cx="1618.6" cy="937.0" r="12"/>
<circle cx="1105.0" cy="1243.5" r="12"/>
<circle cx="2104.8" cy="807.2" r="12"/>
<circle cx="1089.3" cy="1000.0" r="12"/>
<circle cx="1757.8" cy="1094.0" r="12"/>
<circle cx="1035.5" cy="970.3" r="12"/>
<circle cx="1598.5" cy="737.9" r="12"/>
<circle cx="1071.5" cy="899.9" r="12"/>
<circle cx="1702.5" cy="813.2" r="12"/>
<circle cx="1600.0" cy="698.2" r="12"/>
<circle cx="1635.8" cy="1049.0" r="12"/>
<circle cx="1566.1" cy="637.0" r="12"/>
<circle cx="1754.3" cy="958.2" r="12"/>
<circle cx="1162.9" cy="937.2" r="12"/>
<circle cx="1112.9" cy="917.5" r="12"/>
<circle cx="1067.2" cy="1036.4" r="12"/>
<circle cx="1687.2" cy="867.5" r="12"/>
<circle cx="1006.3" cy="946.8" r="12"/>
<circle cx="1572.5" cy="1016.6" r="12"/>
<circle cx="1734.2" cy="938.6" r="12"/>
<circle cx="1658.0" cy="612.4" r="12"/>
<circle cx="1742.3" cy="973.8" r="12"/>
<circle cx="1524.6" cy="728.7" r="12"/>
<circle cx="1578.0" cy="1030.6" r="12"/>
<circle cx="1424.9" cy="948.8" r="12"/>
<circle cx="1758.7" cy="759.8" r="12"/>
<circle cx="1571.5" cy="686.1" r="12"/>
<circle cx="1499.7" cy="984.1" r="12"/>
<circle cx="1636.2" cy="784.2" r="12"/>
<circle cx="1161.5" cy="955.7" r="12"/>
<circle cx="998.7" cy="935.1" r="12"/>
<circle cx="1454.0" cy="969.1" r="12"/>
<circle cx="1427.9" cy="958.4" r="12"/>
<circle cx="1176.8" cy="998.3" r="12"/>
<circle cx="1100.8" cy="916.0" r="12"/>
<circle cx="1582.8" cy="763.0" r="12"/>
<circle cx="1021.4" cy="938.5" r="12"/>
<circle cx="1623.0" cy="721.0" r="12"/>
<circle cx="1403.8" cy="535.5" r="12"/>
<circle cx="1961.2" cy="906.2" r="12"/>
<circle cx="2160.1" cy="1038.1" r="12"/>
<circle cx="1817.4" cy="830.8" r="12"/>
<circle cx="1760.5" cy="825.4" r="12"/>
<circle cx="1465.1" cy="665.2" r="12"/>
<circle cx="1710.0" cy="839.6" r="12"/>
<circle cx="1583.5" cy="763.2" r="12"/>
<circle cx="1480.4" cy="983.0" r="12"/>
<circle cx="1072.3" cy="921.2" r="12"/>
<circle cx="2298.5" cy="804.8" r="12"/>
<circle cx="1716.0" cy="830.5" r="12"/>
<circle cx="1892.7" cy="713.7" r="12"/>
<circle cx="1727.6" cy="1026.1" r="12"/>
<circle cx="1630.9" cy="757.6" r="12"/>
<circle cx="1782.1" cy="851.5" r="12"/>
<circle cx="1937.3" cy="764.0" r="12"/>
<circle cx="2095.1" cy="910.7" r="12"/>
<circle cx="1653.9" cy="630.7" r="12"/>
<circle cx="1715.7" cy="822.5" r="12"/>
<circle cx="1672.6" cy="1202.5" r="12"/>
<circle cx="1458.4" cy="989.4" r="12"/>
<circle cx="1610.0" cy="870.6" r="12"/>
<circle cx="1566.4" cy="720.9" r="12"/>
<circle cx="1647.9" cy="648.1" r="12"/>
<circle cx="1546.9" cy="698.2" r="12"/>
<circle cx="1778.6" cy="1134.7" r="12"/>
<circle cx="1707.1" cy="1102.1" r="12"/>
<circle cx="2089.8" cy="1002.0" r="12"/>
<circle cx="1929.8" cy="1001.9" r="12"/>
<circle cx="1489.3" cy="924.4" r="12"/>
<circle cx="1593.8" cy="806.7" r="12"/>
<circle cx="1441.9" cy="903.7" r="12"/>
<circle cx="1839.4" cy="1144.3" r="12"/>
<circle cx="928.6" cy="887.6" r="12"/>
<circle cx="1673.4" cy="718.9" r="12"/>
<circle cx="1554.2" cy="748.7" r="12"/>
<circle cx="2102.8" cy="723.5" r="12"/>
<circle cx="1622.2" cy="756.8" r="12"/>
<circle cx="1483.8" cy="835.8" r="12"/>
<circle cx="1714.1" cy="1134.1" r="12"/>
<circle cx="2057.9" cy="898.2" r="12"/>
<circle cx="1609.7" cy="1160.2" r="12"/>
<circle cx="1990.6" cy="857.4" r="12"/>
<circle cx="1542.1" cy="677.3" r="12"/>
<circle cx="1027.3" cy="952.2" r="12"/>
<circle cx="1523.8" cy="924.2" r="12"/>
<circle cx="1561.4" cy="974.1" r="12"/>
<circle cx="2233.9" cy="774.8" r="12"/>
<circle cx="1635.7" cy="765.2" r="12"/>
<circle cx="1560.2" cy="591.3" r="12"/>
<circle cx="1830.1" cy="900.6" r="12"/>
<circle cx="1906.5" cy="844.5" r="12"/>
<circle cx="2277.6" cy="983.1" r="12"/>
<circle cx="1711.5" cy="835.2" r="12"/>
<circle cx="1052.4" cy="977.2" r="12"/>
<circle cx="2330.9" cy="1062.0" r="12"/>
<circle cx="1192.0" cy="1163.7" r="12"/>
<circle cx="1081.9" cy="1078.5" r="12"/>
<circle cx="2204.8" cy="952.1" r="12"/>
<circle cx="1620.9" cy="679.2" r="12"/>
<circle cx="1465.2" cy="781.8" r="12"/>
<circle cx="1803.2" cy="876.8" r="12"/>
<circle cx="1645.7" cy="1049.8" r="12"/>
<circle cx="1654.0" cy="731.1" r="12"/>
<circle cx="2111.1" cy="579.0" r="12"/>
<circle cx="1681.9" cy="1037.0" r="12"/>
<circle cx="1154.8" cy="925.7" r="12"/>
<circle cx="1165.1" cy="946.1" r="12"/>
<circle cx="1163.3" cy="951.5" r="12"/>
<circle cx="532.9" cy="1105.0" r="12"/>
<circle cx="1582.9" cy="747.1" r="12"/>
<circle cx="1553.6" cy="1021.9" r="12"/>
<circle cx="1768.5" cy="886.0" r="12"/>
<circle cx="1429.8" cy="942.6" r="12"/>
<circle cx="1631.5" cy="746.6" r="12"/>
<circle cx="1827.7" cy="1052.7" r="12"/>
<circle cx="1445.0" cy="977.7" r="12"/>
<circle cx="2102.6" cy="1018.3" r="12"/>
<circle cx="1624.1" cy="708.2" r="12"/>
<circle cx="1597.3" cy="729.4" r="12"/>
<circle cx="1774.8" cy="996.7" r="12"/>
<circle cx="1651.6" cy="1208.7" r="12"/>
<circle cx="2238.0" cy="798.0" r="12"/>
<circle cx="1690.1" cy="986.8" r="12"/>
<circle cx="1490.7" cy="773.9" r="12"/>
<circle cx="1971.5" cy="981.1" r="12"/>
<circle cx="1688.0" cy="952.2" r="12"/>
<circle cx="1193.3" cy="1003.7" r="12"/>
<circle cx="1618.1" cy="595.3" r="12"/>
<circle cx="1558.8" cy="723.8" r="12"/>
<circle cx="1710.2" cy="815.8" r="12"/>
<circle cx="2200.1" cy="887.2" r="12"/>
<circle cx="1917.5" cy="785.7" r="12"/>
<circle cx="1710.5" cy="1062.3" r="12"/>
<circle cx="2086.5" cy="934.5" r="12"/>
<circle cx="2227.2" cy="1076.7" r="12"/>
<circle cx="1516.1" cy="991.8" r="12"/>
<circle cx="515.3" cy="1149.3" r="12"/>
<circle cx="1163.7" cy="964.8" r="12"/>
<circle cx="1566.3" cy="820.9" r="12"/>
<circle cx="1712.5" cy="785.0" r="12"/>
<circle cx="1879.5" cy="784.9" r="12"/>
<circle cx="1695.7" cy="1018.2" r="12"/>
<circle cx="1689.3" cy="710.7" r="12"/>
<circle cx="1818.3" cy="888.9" r="12"/>
<circle cx="1492.5" cy="646.0" r="12"/>
<circle cx="967.5" cy="798.5" r="12"/>
<circle cx="1192.0" cy="1221.8" r="12"/>
<circle cx="1879.4" cy="767.0" r="12"/>
<circle cx="1133.2" cy="989.4" r="12"/>
<circle cx="2109.7" cy="945.2" r="12"/>
<circle cx="1788.0" cy="936.4" r="12"/>
<circle cx="1670.4" cy="1101.4" r="12"/>
<circle cx="1679.9" cy="1136.2" r="12"/>
</g>
<circle cx="1658.5" cy="574.2" r="16" fill="#4bba82" fill-opacity=".75" stroke="#10162a" stroke-width="4"/>
</svg>
</div>

<div id="zoom"><i style="left:18px;top:32px;width:25px;height:4.4px"></i><i style="left:28px;top:22px;width:5.2px;height:24px"></i><div class="sep"></div><i style="left:18px;top:92px;width:25px;height:4.4px"></i></div>

<div id="foot" class="abs" style="left:0.50px;top:1641.81px;font-size:28.00px;letter-spacing:0.671px;">Data updated regularly • Last sync: 4/4/2026, 9:20:38 PM</div>

<div id="panel">
 <div id="phead">
  <div class="abs" id="pname" style="left:47.90px;top:47.28px;font-size:48.00px;letter-spacing:-1.290px;font-weight:700">Finland</div>
  <div class="abs" id="preg" style="left:48.00px;top:108.20px;font-size:28.00px;letter-spacing:0.020px;color:#94a3b8">Europe</div>
  <svg style="position:absolute;left:554px;top:82px" width="20" height="20" viewBox="0 0 20 20"><path d="M2.5 2.5L17.5 17.5M17.5 2.5L2.5 17.5" stroke="#94a3b8" stroke-width="3.4" fill="none"/></svg>
  <div class="btn" style="left:48px;top:174px;width:542px;height:80px;background:#3761e4">
   <svg style="position:absolute;left:152px;top:24px" width="32" height="32" viewBox="0 0 24 24" fill="none" stroke="#fff" stroke-width="1.5" stroke-linecap="round" stroke-linejoin="round"><path d="M16.023 9.348h4.992v-.001M2.985 19.644v-4.992m0 0h4.992m-4.993 0l3.181 3.183a8.25 8.25 0 0013.803-3.7M4.031 9.865a8.25 8.25 0 0113.803-3.7l3.181 3.182m0-4.991v4.99"/></svg>
   <div class="abs" id="rtxt" style="left:199.20px;top:25.66px;font-size:31.00px;letter-spacing:0.617px;color:#fff;-webkit-text-stroke:.5px #fff">Refresh Data</div>
  </div>
 </div>
 <div class="abs" id="ehead" style="left:48.50px;top:361.53px;font-size:36.00px;letter-spacing:-0.938px;font-weight:700">Energy Resources</div>

 <div class="card" style="top:440px"><div class="dot" style="background:#eba43a"></div><div class="abs nm" id="nm_oil" style="left:81.20px;top:41.22px;font-size:32.00px;letter-spacing:-0.360px;">Oil</div><div class="abs un" id="un_oil" style="left:330.40px;top:43.20px;font-size:28.00px;letter-spacing:0.313px;">Billion Barrels</div><div class="abs val" id="val_oil" style="left:33.20px;top:103.06px;font-size:42.00px;letter-spacing:0.000px;transform-origin:0 0;transform:scaleX(1.0351);">5</div><div class="bar"><b style="width:3px;background:#eba43a"></b></div></div>
 <div class="card" style="top:684px"><div class="dot" style="background:#5081ec"></div><div class="abs nm" id="nm_gas" style="left:79.60px;top:41.22px;font-size:32.00px;letter-spacing:0.306px;">Natural Gas</div><div class="abs un" id="un_gas" style="left:275.80px;top:43.20px;font-size:28.00px;letter-spacing:0.250px;">Trillion Cubic Feet</div><div class="abs val" id="val_gas" style="left:32.00px;top:103.06px;font-size:42.00px;letter-spacing:0.000px;transform-origin:0 0;transform:scaleX(1.1000);">50</div><div class="bar"><b style="width:24px;background:#5081ec"></b></div></div>
 <div class="card" style="top:928px"><div class="dot" style="background:#70778a"></div><div class="abs nm" id="nm_coal" style="left:80.40px;top:41.22px;font-size:32.00px;letter-spacing:0.360px;">Coal</div><div class="abs un" id="un_coal" style="left:358.00px;top:43.20px;font-size:28.00px;letter-spacing:0.595px;">Billion Tons</div><div class="abs val" id="val_coal" style="left:33.00px;top:103.06px;font-size:42.00px;letter-spacing:0.000px;transform-origin:0 0;transform:scaleX(1.0802);">30</div><div class="bar"><b style="width:14px;background:#70778a"></b></div></div>
 <div class="card" style="top:1172px"><div class="dot" style="background:#875fee"></div><div class="abs nm" id="nm_diesel" style="left:79.40px;top:41.22px;font-size:32.00px;letter-spacing:0.540px;">Diesel</div><div class="abs un" id="un_diesel" style="left:330.40px;top:43.20px;font-size:28.00px;letter-spacing:0.313px;">Billion Barrels</div><div class="abs val" id="val_diesel" style="left:32.00px;top:103.06px;font-size:42.00px;letter-spacing:0.000px;transform-origin:0 0;transform:scaleX(1.0605);">2</div><div class="bar"><b style="width:1px;background:#875fee"></b></div></div>
 <div class="card" style="top:1416px"><div class="dot" style="background:#55b685"></div><div class="abs nm" id="nm_ren" style="left:79.00px;top:41.22px;font-size:32.00px;letter-spacing:0.300px;">Renewables</div><div class="abs un" id="un_ren" style="left:458.00px;top:43.20px;font-size:28.00px;letter-spacing:-1.500px;">GW</div><div class="abs val" id="val_ren" style="left:31.00px;top:103.06px;font-size:42.00px;letter-spacing:0.000px;transform-origin:0 0;transform:scaleX(1.0331);">100</div><div class="bar"><b style="width:47px;background:#55b685"></b></div></div>

 <div id="pfoot">
  <div class="btn" style="left:32px;top:32px;width:574px;height:80px;background:#364053">
   <svg style="position:absolute;left:207.5px;top:24.5px" width="32" height="32" viewBox="0 0 24 24" fill="none" stroke="#fff" stroke-width="1.5" stroke-linecap="round" stroke-linejoin="round"><path d="M15.75 19.5L8.25 12l7.5-7.5"/></svg>
   <div class="abs" id="etxt" style="left:255.00px;top:25.77px;font-size:31.00px;letter-spacing:1.140px;color:#fff;-webkit-text-stroke:.5px #fff">Expand</div>
  </div>
 </div>
</div>
</body></html>
